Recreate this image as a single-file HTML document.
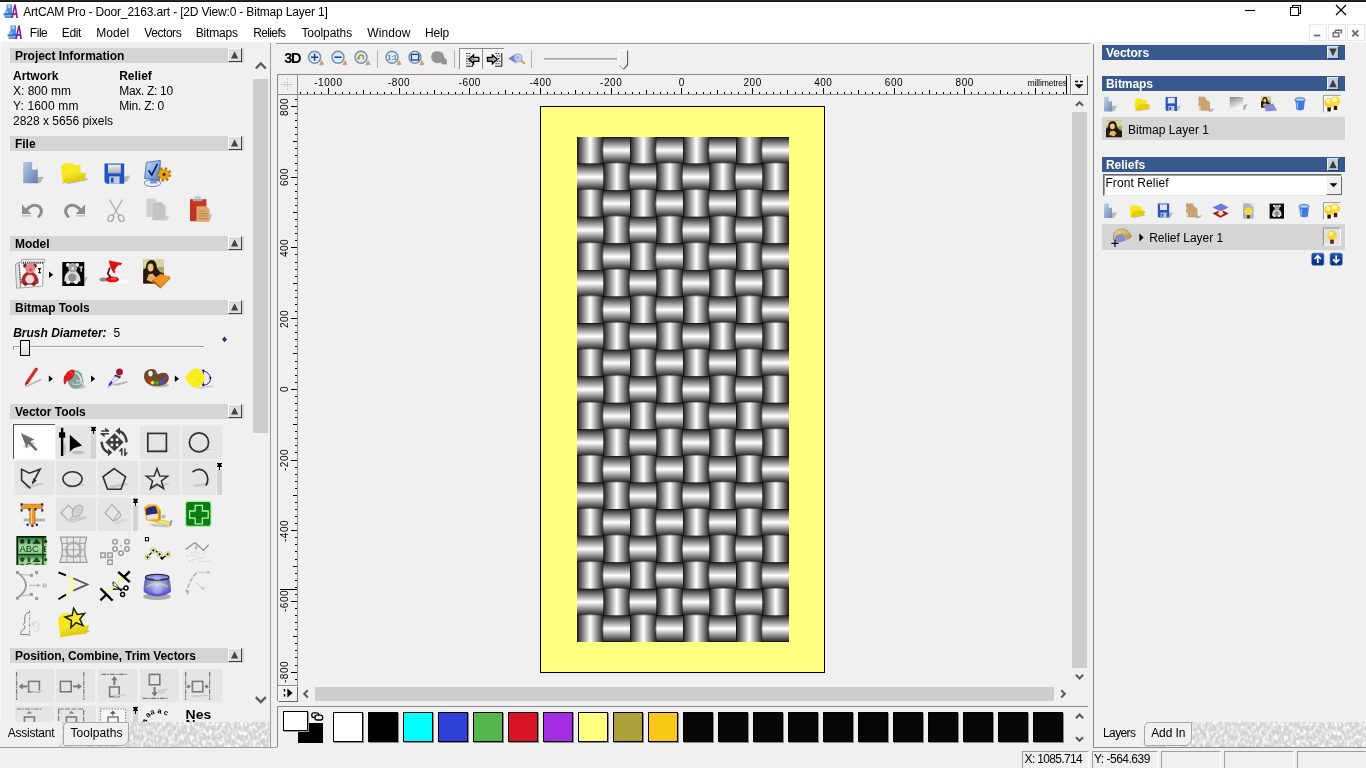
<!DOCTYPE html>
<html><head><meta charset="utf-8"><title>ArtCAM Pro - Door_2163.art</title>
<style>
*{box-sizing:border-box;margin:0;padding:0}
html,body{width:1366px;height:768px;overflow:hidden;background:#f0f0f0;font-family:"Liberation Sans",sans-serif;font-size:12px;color:#000}
.a{position:absolute}
.t{white-space:nowrap;line-height:normal}
svg{overflow:visible}
.sh{background:#d5d5d5}
.cb{background:#dedede;border-top:1px solid #fff;border-left:1px solid #fff;border-right:1px solid #404040;border-bottom:1px solid #404040}
.rh{background:#38598e}
.rcb{background:#c3cde0;border-top:1px solid #e8eef8;border-left:1px solid #e8eef8;border-right:1px solid #2a3a5a;border-bottom:1px solid #2a3a5a}
.cell{background:#e6e6e6}
.sunk{border-top:1px solid #a0a0a0;border-left:1px solid #a0a0a0;border-right:1px solid #fff;border-bottom:1px solid #fff}
.raised{background:#f0f0f0;border-top:1px solid #fff;border-left:1px solid #fff;border-right:1px solid #696969;border-bottom:1px solid #696969}
.sw{border:1px solid #000;box-shadow:1px 1px 0 #8a8a8a}
</style></head><body><div id="app" class="a" style="left:0;top:0;width:1366px;height:768px;overflow:hidden;will-change:transform">
<div class="a" style="left:0px;top:0px;width:1366px;height:42px;background:#fff"></div>
<div class="a" style="left:0px;top:0px;width:1366px;height:1px;background:#262626"></div>
<div class="a" style="left:0px;top:1px;width:1366px;height:1px;background:#171717"></div>
<svg class="a" style="left:2.5px;top:4px;" width="15" height="15" viewBox="0 0 15 15">
<rect x="3.5" y="0.5" width="5.5" height="9.5" fill="#4f8fd6"/>
<rect x="4.6" y="1.2" width="3" height="3" fill="#a8d4f4"/>
<rect x="0.6" y="9.2" width="9" height="2.2" fill="#2f6fc0"/>
<rect x="1.6" y="11.4" width="7.4" height="2.6" fill="#5b9be0"/>
<rect x="2" y="6.5" width="3" height="2.8" fill="#7fb4ea"/>
<path d="M8.2 14 L11.2 0.6 L12.8 0.6 L15 14 L13.2 14 L12.8 10.8 L10.6 10.8 L10 14 Z M10.9 9 L12.6 9 L11.9 4.4 Z" fill="#7a1f96" fill-rule="evenodd"/>
</svg>
<div class="a t" style="left:23.2px;top:4.94px;font-size:12px;letter-spacing:-0.176px;">ArtCAM Pro - Door_2163.art - [2D View:0 - Bitmap Layer 1]</div>
<svg class="a" style="left:1240px;top:0px;" width="120" height="22" viewBox="0 0 120 22"><path d="M5 10.5H15" stroke="#000" stroke-width="1.1" fill="none"/><path d="M50.5 7.5H58.5V15.5H50.5Z M52.5 7.5V5.5H60.5V13.5H58.5" stroke="#000" stroke-width="1.1" fill="none"/><path d="M96 5L106 15M106 5L96 15" stroke="#000" stroke-width="1.2" fill="none"/></svg>
<svg class="a" style="left:7.3px;top:24.5px;" width="15" height="15" viewBox="0 0 15 15">
<rect x="3.5" y="0.5" width="5.5" height="9.5" fill="#4f8fd6"/>
<rect x="4.6" y="1.2" width="3" height="3" fill="#a8d4f4"/>
<rect x="0.6" y="9.2" width="9" height="2.2" fill="#2f6fc0"/>
<rect x="1.6" y="11.4" width="7.4" height="2.6" fill="#5b9be0"/>
<rect x="2" y="6.5" width="3" height="2.8" fill="#7fb4ea"/>
<path d="M8.2 14 L11.2 0.6 L12.8 0.6 L15 14 L13.2 14 L12.8 10.8 L10.6 10.8 L10 14 Z M10.9 9 L12.6 9 L11.9 4.4 Z" fill="#7a1f96" fill-rule="evenodd"/>
</svg>
<div class="a t" style="left:29.8px;top:25.74px;font-size:12px;letter-spacing:-0.45px;">File</div>
<div class="a t" style="left:61.8px;top:25.74px;font-size:12px;letter-spacing:-0.35px;">Edit</div>
<div class="a t" style="left:96.2px;top:25.74px;font-size:12px;letter-spacing:0.08px;">Model</div>
<div class="a t" style="left:144.3px;top:25.74px;font-size:12px;letter-spacing:-0.44px;">Vectors</div>
<div class="a t" style="left:195.8px;top:25.74px;font-size:12px;letter-spacing:-0.19px;">Bitmaps</div>
<div class="a t" style="left:253.2px;top:25.74px;font-size:12px;letter-spacing:-0.63px;">Reliefs</div>
<div class="a t" style="left:301.4px;top:25.74px;font-size:12px;letter-spacing:-0.07px;">Toolpaths</div>
<div class="a t" style="left:367.2px;top:25.74px;font-size:12px;letter-spacing:0.12px;">Window</div>
<div class="a t" style="left:425.1px;top:25.74px;font-size:12px;letter-spacing:-0.2px;">Help</div>
<div class="a" style="left:1309px;top:24px;width:18px;height:17px;border:1px solid #e8e8e8;background:#fdfdfd"></div>
<div class="a" style="left:1328px;top:24px;width:18px;height:17px;border:1px solid #e8e8e8;background:#fdfdfd"></div>
<div class="a" style="left:1347px;top:24px;width:18px;height:17px;border:1px solid #e8e8e8;background:#fdfdfd"></div>
<svg class="a" style="left:1309px;top:24px;" width="56" height="17" viewBox="0 0 56 17"><rect x="5" y="10.6" width="6.2" height="1.8" fill="#6a6a6a"/><path d="M26.2 6.2H32.4V9.4 M26.2 6.2V8.2" stroke="#6a6a6a" stroke-width="1.5" fill="none"/><rect x="24.2" y="8.8" width="5.6" height="3.8" stroke="#6a6a6a" stroke-width="1.4" fill="none"/><path d="M43.3 6.3L49.3 12.3M49.3 6.3L43.3 12.3" stroke="#6a6a6a" stroke-width="1.9" fill="none"/></svg>
<div class="a" style="left:0px;top:42px;width:1px;height:706px;background:#fafafa"></div>
<div class="a" style="left:270px;top:43px;width:1px;height:705px;background:#9c9c9c"></div>
<div class="a" style="left:0px;top:746.5px;width:277px;height:1px;background:#9c9c9c"></div>
<div class="a" style="left:0;top:0;width:253px;height:721.5px;overflow:hidden"><div class="a sh" style="left:10px;top:48px;width:234px;height:15px;"></div><div class="a t" style="left:15px;top:48.94px;font-size:12px;letter-spacing:-0.04px;font-weight:bold;">Project Information</div><div class="a cb" style="left:228px;top:48px;width:14px;height:14px;"></div><div class="a sh" style="left:10px;top:136px;width:234px;height:15px;"></div><div class="a t" style="left:15px;top:136.94px;font-size:12px;letter-spacing:-0.04px;font-weight:bold;">File</div><div class="a cb" style="left:228px;top:136px;width:14px;height:14px;"></div><div class="a sh" style="left:10px;top:236px;width:234px;height:15px;"></div><div class="a t" style="left:15px;top:236.94px;font-size:12px;letter-spacing:-0.04px;font-weight:bold;">Model</div><div class="a cb" style="left:228px;top:236px;width:14px;height:14px;"></div><div class="a sh" style="left:10px;top:300px;width:234px;height:15px;"></div><div class="a t" style="left:15px;top:300.94px;font-size:12px;letter-spacing:-0.04px;font-weight:bold;">Bitmap Tools</div><div class="a cb" style="left:228px;top:300px;width:14px;height:14px;"></div><div class="a sh" style="left:10px;top:404px;width:234px;height:15px;"></div><div class="a t" style="left:15px;top:404.94px;font-size:12px;letter-spacing:-0.04px;font-weight:bold;">Vector Tools</div><div class="a cb" style="left:228px;top:404px;width:14px;height:14px;"></div><div class="a sh" style="left:10px;top:648px;width:234px;height:15px;"></div><div class="a t" style="left:15px;top:648.94px;font-size:12px;letter-spacing:-0.1px;font-weight:bold;">Position, Combine, Trim Vectors</div><div class="a cb" style="left:228px;top:648px;width:14px;height:14px;"></div><div class="a t" style="left:13px;top:68.84px;font-size:12px;font-weight:bold;">Artwork</div><div class="a t" style="left:119.2px;top:68.84px;font-size:12px;font-weight:bold;">Relief</div><div class="a t" style="left:13px;top:83.74px;font-size:12px;">X: 800 mm</div><div class="a t" style="left:119.2px;top:83.74px;font-size:12px;letter-spacing:-0.3px;">Max. Z: 10</div><div class="a t" style="left:13px;top:98.74px;font-size:12px;letter-spacing:0.15px;">Y: 1600 mm</div><div class="a t" style="left:119.2px;top:98.74px;font-size:12px;letter-spacing:-0.2px;">Min. Z: 0</div><div class="a t" style="left:13px;top:113.84px;font-size:12px;">2828 x 5656 pixels</div><div class="a t" style="left:13.2px;top:326.04px;font-size:12px;font-weight:bold;font-style:italic;">Brush Diameter:</div><div class="a t" style="left:113.6px;top:326.04px;font-size:12px;">5</div><div class="a" style="left:13px;top:346px;width:191px;height:1px;background:#a0a0a0"></div><div class="a" style="left:13px;top:347px;width:191px;height:1px;background:#fff"></div><div class="a" style="left:13px;top:346px;width:1px;height:4px;background:#a0a0a0"></div><div class="a" style="left:20px;top:340px;width:10px;height:16px;background:linear-gradient(#fdfdfd,#dcdcdc);border:1px solid #000"></div><div class="a" style="left:13px;top:424px;width:42px;height:35px;background:#fff;border-top:1px solid #555;border-left:1px solid #555"></div>
<div class="a" style="left:56px;top:426px;width:35px;height:33px;background:#e5e5e5"></div>
<div class="a" style="left:91px;top:426px;width:5px;height:33px;background:#d4d4d4"></div>
<div class="a" style="left:140px;top:426px;width:40px;height:33px;background:#e5e5e5"></div>
<div class="a" style="left:182px;top:426px;width:40px;height:33px;background:#e5e5e5"></div>
<div class="a" style="left:14px;top:461px;width:40px;height:34px;background:#e5e5e5"></div>
<div class="a" style="left:56px;top:461px;width:40px;height:34px;background:#e5e5e5"></div>
<div class="a" style="left:98px;top:461px;width:40px;height:34px;background:#e5e5e5"></div>
<div class="a" style="left:140px;top:461px;width:40px;height:34px;background:#e5e5e5"></div>
<div class="a" style="left:182px;top:461px;width:34px;height:34px;background:#e5e5e5"></div>
<div class="a" style="left:217px;top:469px;width:5px;height:26px;background:#d4d4d4"></div>
<div class="a" style="left:56px;top:498px;width:40px;height:32.5px;background:#e5e5e5"></div>
<div class="a" style="left:98px;top:498px;width:33px;height:32.5px;background:#e5e5e5"></div>
<div class="a" style="left:133px;top:505px;width:5px;height:25.5px;background:#d4d4d4"></div><div class="a" style="left:15px;top:669px;width:39px;height:33px;background:#e5e5e5"></div>
<div class="a" style="left:56px;top:669px;width:39px;height:33px;background:#e5e5e5"></div>
<div class="a" style="left:98px;top:669px;width:39px;height:33px;background:#e5e5e5"></div>
<div class="a" style="left:140px;top:669px;width:39px;height:33px;background:#e5e5e5"></div>
<div class="a" style="left:183px;top:669px;width:39px;height:33px;background:#e5e5e5"></div>
<div class="a" style="left:15px;top:706px;width:39px;height:20px;background:#e5e5e5"></div>
<div class="a" style="left:56px;top:706px;width:40px;height:20px;background:#e5e5e5"></div>
<div class="a" style="left:98px;top:706px;width:33px;height:20px;background:#e5e5e5"></div>
<div class="a" style="left:133px;top:710px;width:5px;height:16px;background:#d4d4d4"></div><svg class="a" style="left:0px;top:0px;" width="271" height="768" viewBox="0 0 271 768">
<defs>
<linearGradient id="gdoc" x1="0" y1="0" x2="1" y2="1"><stop offset="0" stop-color="#b9c9e2"/><stop offset="1" stop-color="#5f7fae"/></linearGradient>
<linearGradient id="gdocg" x1="0" y1="0" x2="1" y2="1"><stop offset="0" stop-color="#dcdcdc"/><stop offset="1" stop-color="#b4b4b4"/></linearGradient>
<linearGradient id="gfold" x1="0" y1="0" x2="0.6" y2="1"><stop offset="0" stop-color="#fbee3a"/><stop offset="1" stop-color="#d9bf00"/></linearGradient>
<linearGradient id="gmetal" x1="0" y1="0" x2="0" y2="1"><stop offset="0" stop-color="#f4f4f4"/><stop offset="1" stop-color="#a8a8b0"/></linearGradient>
<linearGradient id="gmon" x1="0" y1="0" x2="1" y2="1"><stop offset="0" stop-color="#bfe2ff"/><stop offset="1" stop-color="#4a7fd0"/></linearGradient>
<radialGradient id="gcyl" cx="0.5" cy="0.4" r="0.6"><stop offset="0" stop-color="#d8d8ff"/><stop offset="1" stop-color="#4a4ac8"/></radialGradient>
<linearGradient id="gabc" x1="0" y1="0" x2="0" y2="1"><stop offset="0" stop-color="#1e5a22"/><stop offset="0.5" stop-color="#9fd69a"/><stop offset="1" stop-color="#2a6a2c"/></linearGradient>
<linearGradient id="gabc2" x1="0" y1="0" x2="0" y2="1"><stop offset="0" stop-color="#2f7a36"/><stop offset="0.55" stop-color="#a6dca4"/><stop offset="1" stop-color="#8cc88c"/></linearGradient>
</defs>
<path d="M234.6 51.2L238.2 58.6H231Z" fill="#444"/>
<path d="M234.6 139.2L238.2 146.6H231Z" fill="#444"/>
<path d="M234.6 239.2L238.2 246.6H231Z" fill="#444"/>
<path d="M234.6 303.2L238.2 310.6H231Z" fill="#444"/>
<path d="M234.6 407.2L238.2 414.6H231Z" fill="#444"/>
<path d="M234.6 651.2L238.2 658.6H231Z" fill="#444"/><path d="M224.5 336.6L227 339.4L224.5 342.2L222 339.4Z" fill="#2a3a6a"/><path d="M37.8 177H43.8L40.5 182.8L37 183.4Z" fill="#b5b5b5"/>
<path d="M23.2 162H32.2L37.8 169.5V183.2H23.2Z" fill="url(#gdoc)"/>
<path d="M32.2 162L37.8 169.5H32.2Z" fill="#f4f8ff"/>
<path d="M66 184.5L87.5 180L88 178L70 181Z" fill="#b8b8b8"/>
<path d="M61 166.5L64.5 163H72L74 165H80.5V174L62.5 182.5Z" fill="#f6e822"/>
<path d="M62.5 183.6L65.5 174.5Q72 171.5 86.5 173.2L84.5 180.2Q72 181.5 62.5 183.6Z" fill="url(#gfold)"/>
<path d="M124 176.4L130.4 175.6L127 181.8L124 182.6Z" fill="#b9b9b9"/>
<path d="M104.5 163.6H124.2V183.8H106.6L104.5 181.8Z" fill="#1f55c2"/>
<rect x="108" y="164.6" width="12.8" height="8.8" fill="url(#gmetal)"/>
<rect x="109.2" y="176.4" width="10.4" height="7.4" fill="#c8ccd8"/>
<rect x="110.8" y="177.8" width="2.8" height="4.8" fill="#1f55c2"/>
<ellipse cx="152.5" cy="183.2" rx="8.2" ry="3.4" fill="#eef0fa" stroke="#5a78c8" stroke-width="0.9"/>
<path d="M150.6 178L156 178.6L157.4 183.6L150 183.6Z" fill="#8c8ed0"/>
<path d="M146.4 162.4L160.4 160.4L159.4 180.6L144.6 178.4Z" fill="url(#gmon)" stroke="#3b5fb0" stroke-width="0.8"/>
<path d="M148.6 170.4L151.8 175L157.4 164" stroke="#10104a" stroke-width="1.6" fill="none"/>
<circle cx="164" cy="174.4" r="5.4" fill="#e8a416"/><circle cx="164" cy="174.4" r="6" fill="none" stroke="#c07a0a" stroke-width="2.6" stroke-dasharray="2.5 2.2"/><circle cx="164" cy="174.4" r="1.7" fill="#5a3606"/>
<path d="M22 204.5V214H31.5L28 210.8Q33 204.5 38.5 208Q42 212 37 216.5L39 218.2Q46 212 40.8 206Q33.5 200.5 25.8 208.4Z" fill="#8c8c8c"/>
<rect x="22" y="215" width="9" height="1.6" fill="#c2c2c2"/>
<path d="M85 204.5V214H75.5L79 210.8Q74 204.5 68.5 208Q65 212 70 216.5L68 218.2Q61 212 66.2 206Q73.5 200.5 81.2 208.4Z" fill="#8c8c8c"/>
<rect x="76" y="215" width="9" height="1.6" fill="#c2c2c2"/>
<path d="M109.5 199.5L118.5 215M122.5 199.5L113.5 215" stroke="#aeaeae" stroke-width="1.3" fill="none"/>
<ellipse cx="110.8" cy="218.2" rx="2.6" ry="3.4" transform="rotate(28 110.8 218.2)" fill="none" stroke="#a6a6a6" stroke-width="1.3"/>
<ellipse cx="121.2" cy="218.2" rx="2.6" ry="3.4" transform="rotate(-28 121.2 218.2)" fill="none" stroke="#a6a6a6" stroke-width="1.3"/>
<path d="M165 216L169.6 215.4L167 220.5L165 221Z" fill="#cecece"/>
<path d="M146.5 198.5H154.6L157.6 201.6V217H146.5Z" fill="#d0d0d0"/>
<path d="M152 202H161.6L165.8 206.4V220.4H152Z" fill="#c4c4c4" stroke="#e2e2e2" stroke-width="0.8"/>
<path d="M208 214.6L212 214L210.4 220.6L208 221.6Z" fill="#c2c2c2"/>
<path d="M190 199.2H206.4V221.2H190Z" fill="#c2361e"/>
<path d="M194.5 196H201V200.5H194.5Z" fill="#c9c9d2"/><path d="M193 199H202.5V201.2H193Z" fill="#a9a9b2"/>
<path d="M196.5 206.2H206.4L209.6 209.6V221.8H196.5Z" fill="#dcaa70"/>
<path d="M198.5 211H206M198.5 213.5H208M198.5 216H208M198.5 218.5H208" stroke="#b98448" stroke-width="0.9"/><path d="M15.4 264.6L19 262.4L21 287.6L16.6 288.4Z" fill="#e4e4e4" stroke="#8e8e8e" stroke-width="0.8"/>
<path d="M19 262.4L43.6 259.8L42.6 286L21 288Z" fill="#fdfdfd" stroke="#9a9a9a" stroke-width="0.9"/>
<path d="M21.4 259.4L44.4 259.2L44 263L21.6 263.6Z" fill="#ececec" stroke="#8e8e8e" stroke-width="0.7"/>
<path d="M23 262.6H43" stroke="#333" stroke-width="1.6" stroke-dasharray="1 1.1"/><path d="M19.2 265L20.6 285" stroke="#555" stroke-width="1.4" stroke-dasharray="1 1.3"/>
<circle cx="25.2" cy="265.8" r="2.1" fill="#7c2020"/><circle cx="34.8" cy="265.8" r="2.1" fill="#7c2020"/><path d="M29.8 270.8Q20.8 273.2 21.2 283.2Q29.8 286.2 38.6 283.2Q38.8 273.2 29.8 270.8Z" fill="#a82c2c"/><circle cx="30.2" cy="268.6" r="4.9" fill="#e88484"/><ellipse cx="29.8" cy="279.2" rx="4.5" ry="4.4" fill="#f8d4d4"/><ellipse cx="25.4" cy="284.1" rx="2.3" ry="1.8" fill="#8c2424"/><ellipse cx="33.8" cy="284.1" rx="2.3" ry="1.8" fill="#8c2424"/>
<circle cx="30.6" cy="269.6" r="1.6" fill="#c85050"/>
<path d="M38 268.6H41M39.6 268.6V272.6M38.4 272.6H40.8" stroke="#000" stroke-width="1.1"/>
<path d="M49 271.5L53.2 274.7L49 277.9Z" fill="#000"/>
<path d="M84.4 277.6L87.6 276.8L85 283.6L84.4 284Z" fill="#b5b5b5"/>
<rect x="62.3" y="262" width="22" height="24" fill="#020202"/>
<circle cx="68.0" cy="265.1" r="2.0" fill="#f4f4f4"/><circle cx="77.0" cy="265.1" r="2.0" fill="#f4f4f4"/><path d="M72.3 269.8Q63.9 272.0 64.3 281.3Q72.3 284.1 80.5 281.3Q80.7 272.0 72.3 269.8Z" fill="#dadada"/><circle cx="72.7" cy="267.7" r="4.6" fill="#a4a4a4"/><ellipse cx="72.3" cy="277.6" rx="4.2" ry="4.1" fill="#8e8e8e"/><ellipse cx="68.2" cy="282.2" rx="2.1" ry="1.7" fill="#f4f4f4"/><ellipse cx="76.0" cy="282.2" rx="2.1" ry="1.7" fill="#f4f4f4"/>
<circle cx="72.8" cy="268.6" r="1.3" fill="#e8e8e8"/>
<path d="M79.2 267H83M81.1 267V271.8" stroke="#fff" stroke-width="1.2"/>
<ellipse cx="120" cy="281.4" rx="9" ry="2.4" fill="#fbfbfb"/>
<ellipse cx="103.4" cy="279.4" rx="3.8" ry="2" fill="#6a6a6a" opacity="0.75"/>
<ellipse cx="112.4" cy="279.4" rx="6.6" ry="2.9" fill="#e01414"/><ellipse cx="113.4" cy="278.6" rx="3.4" ry="1.3" fill="#f84a3a"/>
<path d="M111 278L107.8 273.6L109.8 267.6" stroke="#4a1010" stroke-width="1.7" fill="none"/>
<path d="M108.6 260.4L122.2 263L114.2 273.6Q110.4 269 108.6 260.4Z" fill="#d81414"/>
<ellipse cx="117.6" cy="268.4" rx="1.6" ry="4" transform="rotate(38 117.6 268.4)" fill="#fff4f0"/>
<rect x="143.2" y="259" width="20.8" height="24.6" fill="#8c8c50"/>
<rect x="143.2" y="259" width="20.8" height="8" fill="#d6d6a0"/><rect x="143.2" y="267" width="20.8" height="5" fill="#a8a870"/>
<path d="M143.2 283.6V270L146 268Q146 260.4 151.4 260Q156.6 260.2 156.8 268L160 272L164 274V283.6Z" fill="#2a1808"/>
<ellipse cx="150.6" cy="267.6" rx="2.9" ry="4" fill="#ecc890"/><path d="M146.6 280L148.6 274.6L152.6 273.6L156 277.6L153 282.6Z" fill="#dcb468"/>
<path d="M152.2 279.8L160.4 274L170.2 276.6L161 286.4Z" fill="#f29422"/><path d="M152.2 279.8L161 286.4L160.6 288.6L152.2 282Z" fill="#b86010"/><path d="M161 286.4L170.2 276.6L170.2 278.8L160.6 288.6Z" fill="#d07814"/><path d="M24.5 386.5L41 378.5L42 380L27 387Z" fill="#b8b8b8"/>
<path d="M24.8 385.5L26 381.5L34.8 368.6L37.4 370.2L28.4 383.4Z" fill="#d82828"/><path d="M24.8 385.5L26 381.5L28.4 383.4Z" fill="#6a3a30"/><path d="M34.8 368.6L35.8 367.4L38.2 369L37.4 370.2Z" fill="#a01818"/>
<path d="M48.8 375.6L53.0 378.8L48.8 382.0Z" fill="#000"/>
<ellipse cx="77.6" cy="386.6" rx="8" ry="2.3" fill="#c2c2c2"/>
<path d="M69 372.2Q76 367.4 81.6 373.6L83.6 382.6Q80.6 389.4 73.4 388.2Q67.8 386 67.4 379Z" fill="#85a39b"/>
<path d="M74.6 372.6Q80 373.4 81.4 381.4" stroke="#f0f4f2" stroke-width="1.3" fill="none"/>
<path d="M72 383.4Q77 386.4 82.4 382.6" stroke="#b9d0c9" stroke-width="1.2" fill="none"/>
<path d="M76.4 380.6Q82.6 380.6 84.2 386.2" stroke="#d6d6d6" stroke-width="1.1" fill="none"/>
<ellipse cx="69.8" cy="375.2" rx="3.9" ry="6.4" transform="rotate(38 69.8 375.2)" fill="#d61e1e"/>
<path d="M64.2 375.4Q63 380 64 384.2Q66.4 384.4 66.8 380.6L68 376.6Z" fill="#d61e1e"/>
<path d="M69 371.8Q72.4 372.2 72.8 374.4" stroke="#f26a5a" stroke-width="1" fill="none"/>
<path d="M91 375.6L95.2 378.8L91 382.0Z" fill="#000"/>
<path d="M112 384.5L127 381L128 382.5L117 386Z" fill="#b6b6b6"/>
<circle cx="119.5" cy="372" r="3.4" fill="#a01838"/><path d="M115 374.5L121 376.5L120 378.5L114 376.5Z" fill="#38383e"/>
<path d="M115.2 376.6L118.8 378L111.5 385L109.5 385.8L108.4 387.4L107.8 386.8L109 384.8L109.4 383.2Z" fill="#eaeafc" stroke="#8c8cc0" stroke-width="0.7"/>
<path d="M112 381.6L109.4 385.2" stroke="#2424a8" stroke-width="1.9"/>
<ellipse cx="159" cy="385" rx="10" ry="2.4" fill="#bdbdbd"/>
<path d="M144 378Q143 370 151 369Q156 368.6 156.5 372.5Q157 375 161 373Q167.5 371.5 168.8 377Q169 385.5 157 386Q146 386 144 378Z" fill="#6e4a2c"/>
<ellipse cx="150.5" cy="373.6" rx="2.2" ry="2.8" fill="#f2f2f2"/>
<circle cx="148.6" cy="381" r="1.9" fill="#e02020"/>
<circle cx="152.6" cy="382.6" r="1.9" fill="#f0e020"/>
<circle cx="157" cy="382.8" r="1.9" fill="#28b828"/>
<circle cx="161.6" cy="381.6" r="1.9" fill="#2060e0"/>
<circle cx="165" cy="378.4" r="1.9" fill="#8030c0"/>
<path d="M174.8 375.6L179.0 378.8L174.8 382.0Z" fill="#000"/>
<path d="M196 387.6L212 385.4L213.6 386.8L200 388.8Z" fill="#c9c9d6"/>
<path d="M203.2 370.6Q209.6 372.6 210.4 377.8Q211 384.6 203.2 385.2Z" fill="#e9e9f8" stroke="#23235e" stroke-width="1"/>
<path d="M185 377.6L190 371.6L193.6 368.4H198L204.4 375V381L199 387.4H193L188 383Z" fill="#f7ee20"/>
<path d="M195.6 377.2L201.6 383" stroke="#e2d60c" stroke-width="0.9"/>
<circle cx="203.2" cy="370.6" r="1.1" fill="#10103a"/><circle cx="210.4" cy="377.8" r="1.1" fill="#10103a"/><circle cx="203.2" cy="385.2" r="1.1" fill="#10103a"/><path d="M23 446.5L33 441.5L35 443.5L27 448.5Z" fill="#c9c9c9"/>
<path d="M20.8 433L34.4 439.4L30.2 441.6L37.6 449.4L35.6 451L28.4 443.6L26.6 448Z" fill="#6c6c6c"/>
<ellipse cx="64.5" cy="449" rx="1.6" ry="6" fill="#c6c6c6"/><ellipse cx="78" cy="452.6" rx="6.5" ry="1.8" fill="#bdbdbd"/>
<rect x="60.9" y="427.8" width="2.4" height="28.2" fill="#000"/><rect x="59" y="432.3" width="6.2" height="5.4" fill="#000"/>
<path d="M69.8 434.8V452L73.6 448.2L82 445.6Z" fill="#000"/>
<path d="M91 427.5H96M92.2 427V430H94.8V427M91 430.5H96M93.5 430.5V434" stroke="#000" stroke-width="1" fill="none"/><rect x="92" y="427" width="3" height="3.5" fill="#000"/>
<path d="M114.5 433.2L123.6 442.3L114.5 451.3L105.4 442.3Z" fill="#3c3c3c"/>
<rect x="110.6" y="438.4" width="2.6" height="2.6" fill="#f4f4f4"/>
<rect x="115.8" y="438.4" width="2.6" height="2.6" fill="#f4f4f4"/>
<rect x="110.6" y="443.6" width="2.6" height="2.6" fill="#f4f4f4"/>
<rect x="115.8" y="443.6" width="2.6" height="2.6" fill="#f4f4f4"/>
<path d="M119.6 431.2Q126 433.6 126.6 442.4" stroke="#3c3c3c" stroke-width="2.5" fill="none"/><path d="M115.4 431L120 427.2V435Z" fill="#3c3c3c"/>
<path d="M101.6 441.8Q102 450 108.4 452.6" stroke="#3c3c3c" stroke-width="2.5" fill="none"/><path d="M112.4 452.6L108 448.6V456.2Z" fill="#3c3c3c"/>
<path d="M101.2 431H109M100.6 433.8H109" stroke="#3c3c3c" stroke-width="1.5"/><path d="M105.2 427.6L109.4 431H105.2Z M100.2 433.8H104.6V437.2Z" fill="#3c3c3c"/>
<path d="M121.8 448V455.6M124.9 448.4V456" stroke="#3c3c3c" stroke-width="1.5"/><path d="M121.8 447.4V451.6H118.6Z M124.9 456.6V452.4H128.1Z" fill="#3c3c3c"/>
<path d="M148.5 450L166.5 449L170.5 450.6L150 451.8Z" fill="#c6c6c6"/>
<rect x="147.8" y="433.4" width="18.6" height="18" fill="none" stroke="#2e2e2e" stroke-width="1.7"/>
<path d="M192 450.5L208 448.5L212.5 449.6L196 452.6Z" fill="#c6c6c6"/>
<circle cx="199" cy="442.4" r="9.6" fill="none" stroke="#2e2e2e" stroke-width="1.7"/>
<path d="M23 486.5L41 483L45 484L27 488.6Z" fill="#c8c8c8"/>
<path d="M30.4 488.4L21.6 480.4V469.2L29.4 473.2L40 469.2L32.6 483.2" fill="none" stroke="#2e2e2e" stroke-width="1.6"/><path d="M32 484.6L33.2 478.6L36.8 480.6Z" fill="#2e2e2e"/>
<path d="M66 486.5L82 483.6L85 485L70 488.4Z" fill="#c8c8c8"/>
<ellipse cx="72.5" cy="479" rx="9.6" ry="7.3" fill="none" stroke="#2e2e2e" stroke-width="1.6"/>
<path d="M108 486L126 483L129 484.6L112 488.4Z" fill="#c8c8c8"/>
<path d="M114.2 468.6L125.6 476.8L121 489.2H107.6L103 476.8Z" fill="none" stroke="#2e2e2e" stroke-width="1.6"/>
<path d="M150 486L167 483L170 484.6L153 488.4Z" fill="#c8c8c8"/>
<polygon points="157.0,468.4 159.7,475.9 167.7,476.1 161.4,481.0 163.6,488.7 157.0,484.2 150.4,488.7 152.6,481.0 146.3,476.1 154.3,475.9" fill="none" stroke="#2e2e2e" stroke-width="1.5"/>
<path d="M193 485L206 483L209 484.4L196 486.8Z" fill="#c8c8c8"/>
<path d="M192.5 472Q200 466.5 205.5 472.5Q210 479 205.8 485.6" fill="none" stroke="#2e2e2e" stroke-width="1.7"/>
<path d="M217 463.5H222M218.2 463V466H220.8V463M217 466.5H222M219.5 466.5V470" stroke="#000" stroke-width="1" fill="none"/><rect x="218" y="463" width="3" height="3.5" fill="#000"/>
<rect x="23.6" y="518.6" width="21.4" height="2.8" fill="#b2b2b2"/>
<path d="M21.4 504.2H42.4V508.6H35V524H29.8V508.6H21.4Z" fill="#ee9a22" stroke="#b46a0a" stroke-width="0.7"/>
<path d="M31.4 508.8V523.6" stroke="#fbd08a" stroke-width="1.3"/>
<rect x="20.5" y="503.29999999999995" width="2.2" height="2.2" fill="#1c1c64"/>
<rect x="41.1" y="503.29999999999995" width="2.2" height="2.2" fill="#1c1c64"/>
<rect x="20.5" y="509.29999999999995" width="2.2" height="2.2" fill="#1c1c64"/>
<rect x="41.1" y="509.29999999999995" width="2.2" height="2.2" fill="#1c1c64"/>
<rect x="28.299999999999997" y="508.29999999999995" width="2.2" height="2.2" fill="#1c1c64"/>
<rect x="34.3" y="508.29999999999995" width="2.2" height="2.2" fill="#1c1c64"/>
<rect x="26.5" y="523.6999999999999" width="2.2" height="2.2" fill="#1c1c64"/>
<rect x="31.299999999999997" y="524.6999999999999" width="2.2" height="2.2" fill="#1c1c64"/>
<rect x="35.699999999999996" y="523.6999999999999" width="2.2" height="2.2" fill="#1c1c64"/>
<path d="M61 513L68.5 505L76 513L68.5 521Z" fill="none" stroke="#ababab" stroke-width="1.1"/>
<ellipse cx="77.5" cy="511" rx="4.5" ry="6.5" transform="rotate(35 77.5 511)" fill="#d2d2d2" stroke="#ababab" stroke-width="1"/>
<path d="M66 520L84 516L88 518L72 523Z" fill="#cdcdcd"/>
<path d="M105 513L112 504.5L119 512L113 521Z" fill="none" stroke="#ababab" stroke-width="1.1"/>
<path d="M119 512Q124 517 113 521" fill="none" stroke="#ababab" stroke-width="1.1"/><path d="M112 522L125 518.5L128 520L116 524.4Z" fill="#d6d6d6"/>
<path d="M133 499.3H138M134.2 498.8V501.8H136.8V498.8M133 502.3H138M135.5 502.3V505.8" stroke="#000" stroke-width="1" fill="none"/><rect x="134" y="498.8" width="3" height="3.5" fill="#000"/>
<path d="M149 523.6L166 525L170 527.4L153 526.6Z" fill="#c6c6c6"/>
<path d="M157 518.8L171.4 522.6L170.4 526L155.4 522.6Z" fill="#f6e468" stroke="#c0aa48" stroke-width="0.5"/>
<rect x="169.8" y="520.2" width="2" height="5.4" fill="#9c9c9c" transform="rotate(14 170.8 523)"/>
<path d="M143.8 507.4L148 504.4H156.8L161 510.6V519.2L157.4 522.6L146 520.2Z" fill="#f2b41c"/>
<path d="M145.6 509Q150 505.6 155.8 506.6L158 513.6L146.2 515.2Z" fill="#2b2b74"/>
<path d="M146.2 515.2L158 513.6L157.4 519L147 519.4Z" fill="#e6dfe8"/>
<path d="M158.6 508L160.4 511V519L158.8 520.8Z" fill="#c88c0c"/>
<circle cx="163.4" cy="516.8" r="2" fill="#b4b4c0"/>
<rect x="185.6" y="501.4" width="25.4" height="25" rx="2.6" fill="#0a7d12" stroke="#a6f0a0" stroke-width="1.2"/>
<path d="M195.2 505.4H202.4V511H208.2V518.2H202.4V523.8H195.2V518.2H189.6V511H195.2Z" fill="none" stroke="#b6f4b0" stroke-width="1.3"/><rect x="17.2" y="536" width="29" height="29" fill="#4c9a50"/>
<rect x="18.8" y="537.6" width="23.4" height="16" fill="url(#gabc2)"/><rect x="18.8" y="555.2" width="23.4" height="9.8" fill="url(#gabc2)"/>
<rect x="43.6" y="537.6" width="2.6" height="16" fill="url(#gabc2)"/><rect x="43.6" y="555.2" width="2.6" height="9.8" fill="url(#gabc2)"/>
<path d="M17.2 565V536.8H46.2" fill="none" stroke="#081c0a" stroke-width="1.7"/>
<path d="M18 554.5H46.2M42.9 537V565" stroke="#0c2c10" stroke-width="1.2"/>
<circle cx="22.2" cy="541.4" r="2.3" fill="#0e3614"/><rect x="27.6" y="539.2" width="2.6" height="4.6" fill="#0e3614"/><path d="M32.4 543.8L36.6 538.8L40.8 543.8Z" fill="#0e3614"/>
<text x="19.4" y="551.6" font-size="9.4" font-family="Liberation Sans" fill="#0e3614" textLength="19.6" lengthAdjust="spacingAndGlyphs">ABC</text>
<circle cx="22.2" cy="559.6" r="2.3" fill="#1c5224"/><rect x="27.6" y="557.4" width="2.6" height="4.6" fill="#1c5224"/><path d="M32.4 562L36.6 557L40.8 562Z" fill="#1c5224"/>
<path d="M20 565Q22 563.4 24 565M27 565V563.6H31M34.6 565Q36.6 563.2 39.6 564.6" stroke="#1c5224" stroke-width="1" fill="none"/>
<circle cx="45.6" cy="541.4" r="1.6" fill="#0e3614"/><path d="M44.4 546.4V551.6M44.4 546.6H46.2M44.4 549H46.2M44.4 551.4H46.2" stroke="#0e3614" stroke-width="0.9" fill="none"/><circle cx="45.6" cy="559.6" r="1.6" fill="#1c5224"/>
<path d="M60.4 537.2H86.6Q82.6 550 87 562.4H60Q64.6 550 60.4 537.2Z" fill="#e8e8e8" stroke="#9a9a9a" stroke-width="1.2"/>
<path d="M66.8 537.2Q68.6 550 66.6 562.4M73.5 537.2V562.4M80.2 537.2Q78.4 550 80.4 562.4M61.8 543.4H85.2M63 549.8H84M61.8 556.2H85.2" fill="none" stroke="#9a9a9a" stroke-width="0.9"/>
<circle cx="73.5" cy="549.8" r="7.2" fill="none" stroke="#b0b0b0" stroke-width="2.4"/>
<rect x="100.8" y="553.0" width="4.4" height="4.4" fill="#f4f4f4" stroke="#9a9a9a" stroke-width="1.5"/>
<rect x="107.8" y="553.0" width="4.4" height="4.4" fill="#f4f4f4" stroke="#9a9a9a" stroke-width="1.5"/>
<rect x="107.8" y="560.0" width="4.4" height="4.4" fill="#f4f4f4" stroke="#9a9a9a" stroke-width="1.5"/>
<circle cx="115" cy="541.8" r="2.2" fill="#f4f4f4" stroke="#9a9a9a" stroke-width="1.5"/>
<circle cx="127" cy="541.8" r="2.2" fill="#f4f4f4" stroke="#9a9a9a" stroke-width="1.5"/>
<circle cx="115" cy="549" r="2.2" fill="#f4f4f4" stroke="#9a9a9a" stroke-width="1.5"/>
<circle cx="127" cy="549" r="2.2" fill="#f4f4f4" stroke="#9a9a9a" stroke-width="1.5"/>
<circle cx="121" cy="553.2" r="2.2" fill="#f4f4f4" stroke="#9a9a9a" stroke-width="1.5"/>
<rect x="120.3" y="545" width="1.4" height="1.4" fill="#9a9a9a"/>
<rect x="145.4" y="537.6" width="3.2" height="3.2" fill="#fff" stroke="#000" stroke-width="1"/>
<path d="M147.6 557.2L153.3 550.4L156.4 551.4L159.6 554.3L162 558.6L167.8 554.3" fill="none" stroke="#000" stroke-width="1.3"/>
<path d="M159.8 557.4L162 560.2L164.4 557.4Z" fill="#000"/>
<circle cx="147.6" cy="557.2" r="2.7" fill="#f7f7b8" stroke="#a4a458" stroke-width="0.6"/><path d="M146.2 557.2H149.0M147.6 555.8000000000001V558.6" stroke="#000" stroke-width="0.8"/>
<circle cx="153.3" cy="550.4" r="2.7" fill="#f7f7b8" stroke="#a4a458" stroke-width="0.6"/><path d="M151.9 550.4H154.70000000000002M153.3 549.0V551.8" stroke="#000" stroke-width="0.8"/>
<circle cx="159.6" cy="554.3" r="2.7" fill="#f7f7b8" stroke="#a4a458" stroke-width="0.6"/><path d="M158.2 554.3H161.0M159.6 552.9V555.6999999999999" stroke="#000" stroke-width="0.8"/>
<circle cx="167.8" cy="554.3" r="2.7" fill="#f7f7b8" stroke="#a4a458" stroke-width="0.6"/><path d="M166.4 554.3H169.20000000000002M167.8 552.9V555.6999999999999" stroke="#000" stroke-width="0.8"/>
<path d="M185.6 549.6L193.6 543.4Q195 542.2 196.2 543.6L203.4 550.4L208.8 544.6" fill="none" stroke="#8e8e8e" stroke-width="1.3"/>
<path d="M196.2 544.6V548.6M195 547.2L196.2 549.2L197.4 547.2" fill="none" stroke="#9a9a9a" stroke-width="0.8"/>
<path d="M187 557Q192 553 197 556.4T207 555.4M189 561.4Q195 557.6 200 560.6T210 559.6M191 553Q195 551 199 553.2T205.6 552.6" fill="none" stroke="#d4d4d4" stroke-width="1.2" stroke-dasharray="2 1.4"/>
<path d="M17.4 572.4Q34.6 585.4 17.4 598.2" fill="none" stroke="#9a9a9a" stroke-width="1.8"/>
<path d="M20.6 574.4L31.4 575.4M20.6 596.2L31.4 594.4M29 585.4H39.6" fill="none" stroke="#b4b4b4" stroke-width="1"/><path d="M37.4 583.6L40.6 585.4L37.4 587.2Z" fill="#b4b4b4"/>
<rect x="15.899999999999999" y="570.9" width="3" height="3" fill="#9a9a9a"/>
<rect x="15.899999999999999" y="596.7" width="3" height="3" fill="#9a9a9a"/>
<rect x="29.9" y="573.9" width="3" height="3" fill="#9a9a9a"/>
<rect x="35.1" y="571.1" width="3" height="3" fill="#9a9a9a"/>
<rect x="29.9" y="592.9" width="3" height="3" fill="#9a9a9a"/>
<rect x="35.1" y="596.9" width="3" height="3" fill="#9a9a9a"/>
<rect x="43.2" y="584" width="2.8" height="2.8" fill="#f4f4f4" stroke="#9a9a9a" stroke-width="0.8"/>
<path d="M65.4 574.8L74.6 579L74.6 590L65.4 594.8L71 584.8Z" fill="#f6f9b4"/>
<path d="M58.4 572.4L66 575.4M58.4 599.2L66 594.6" stroke="#000" stroke-width="1.9" fill="none"/>
<path d="M66 575.4L73.4 578.4M66 594.6L73.4 590.6" stroke="#e4ea7a" stroke-width="1.2" stroke-dasharray="1.2 1" fill="none"/>
<path d="M73.4 578.4L87.4 584.4L73.4 590.6" stroke="#5a5a5a" stroke-width="1.7" fill="none"/>
<path d="M107.5 593L123 577" stroke="#f2f6a8" stroke-width="3.4"/>
<path d="M118.2 571.8L129.8 582.2M129.8 571.4L123.6 577.4" stroke="#000" stroke-width="2.4" fill="none"/>
<path d="M100.4 588.4L112.6 600.6M100.4 600.4L106.6 594.2" stroke="#000" stroke-width="2.2" fill="none"/>
<path d="M112.6 582.6L121.6 591.2M112.8 589.2H124" stroke="#000" stroke-width="1.2" fill="none"/><path d="M113.4 581.8L115.6 583.6L119.6 588.4L113 585.4Z" fill="#fff" stroke="#000" stroke-width="0.7"/>
<circle cx="126" cy="588" r="2" fill="#fff" stroke="#000" stroke-width="1.5"/><circle cx="122.6" cy="594.4" r="2" fill="#fff" stroke="#000" stroke-width="1.5"/>
<ellipse cx="157" cy="596.6" rx="14" ry="3.4" fill="#aaaaaa"/>
<path d="M145.4 577.4Q143 586 143.8 592Q157 600.4 170.8 592Q171.4 586 169 577.4Z" fill="url(#gcyl)"/>
<ellipse cx="157.2" cy="577.2" rx="11.8" ry="2.9" fill="#8c8ce4" stroke="#2c2c3c" stroke-width="1.3"/>
<ellipse cx="157.2" cy="578.2" rx="4" ry="1.6" fill="#a8a8f4"/>
<path d="M145.6 587.4Q157 579.6 169.2 587.4" fill="none" stroke="#dde25a" stroke-width="1.1"/>
<path d="M146.6 579.6L146 588M167.8 579.6L168.6 588" stroke="#6c7a4a" stroke-width="0.9"/>
<ellipse cx="157.2" cy="590" rx="5" ry="4" fill="#b4b4f8" opacity="0.55"/>
<path d="M196.6 572.4Q190 580 186.6 590.4" fill="none" stroke="#b4b4b4" stroke-width="1.5" stroke-dasharray="5 1.6"/>
<path d="M198 572.4H209M196 583L203 588.6" stroke="#c6c6c6" stroke-width="1" fill="none"/><path d="M207.4 570.8L210.4 572.4L207.4 574Z M185 590L187.6 595.6L189.6 590.6Z M201.4 589L204.4 589.8L203.4 586.8Z" fill="#b4b4b4"/>
<path d="M29.6 610V636" stroke="#8a8a8a" stroke-width="0.9" stroke-dasharray="3.4 1.2 1 1.2"/>
<path d="M29 612.4Q24.4 613.4 24.8 619Q25.4 622.4 23.4 624.6Q25.6 626 24.8 628.4Q20.6 630.4 20.6 634.6H29" fill="none" stroke="#7c7c7c" stroke-width="1"/>
<path d="M33 622Q38.6 621 39 627Q38.6 631.6 34 632" fill="none" stroke="#dadada" stroke-width="1.1"/><path d="M31 624L34 621.6L34 626Z" fill="#cfcfcf"/>
<path d="M62 637L88.6 632L89.6 630L66 634Z" fill="#b8b8b8"/>
<path d="M58 618.4L62 613.4H71L73.4 616H82V628L60 636Z" fill="#f6e81e"/>
<path d="M59.6 637.6L63 627.4Q71 623.4 89 625.6L86.6 633.4Q72 634.6 59.6 637.6Z" fill="url(#gfold)"/>
<polygon points="73.6,608.2 77.3,614.4 84.6,613.5 79.8,619.0 82.9,625.6 76.2,622.7 70.8,627.7 71.5,620.5 65.1,617.0 72.2,615.3" fill="#f6ea2a" stroke="#1c1c1c" stroke-width="1.5"/><path d="M16.6 672V700" stroke="#7a7a7a" stroke-width="1.2" stroke-dasharray="5 1 1.6 1"/>
<rect x="28.6" y="681.4" width="10.8" height="10.4" fill="none" stroke="#7a7a7a" stroke-width="1.6"/><path d="M21.4 686.4H27.4" stroke="#7a7a7a" stroke-width="2"/><path d="M18.6 686.4L22.8 683.2V689.6Z" fill="#7a7a7a"/>
<path d="M30 691.4L42 690.4L44 691.4L33 693Z" fill="#cfcfcf"/>
<path d="M83.8 672V700" stroke="#7a7a7a" stroke-width="1.2" stroke-dasharray="5 1 1.6 1"/>
<rect x="60.4" y="681.4" width="10.8" height="10.4" fill="none" stroke="#7a7a7a" stroke-width="1.6"/><path d="M73 686.4H79" stroke="#7a7a7a" stroke-width="2"/><path d="M82 686.4L77.8 683.2V689.6Z" fill="#7a7a7a"/>
<path d="M101.4 674.4H127.6" stroke="#7a7a7a" stroke-width="1.2" stroke-dasharray="5 1 1.6 1"/>
<rect x="109.6" y="687" width="9.6" height="9.6" fill="none" stroke="#7a7a7a" stroke-width="1.6"/><path d="M114.4 679V685" stroke="#7a7a7a" stroke-width="2"/><path d="M114.4 676L111.2 680.2H117.6Z" fill="#7a7a7a"/>
<path d="M112 695L124 694L126 695.4L115 697Z" fill="#cfcfcf"/>
<path d="M142.6 698.4H168" stroke="#7a7a7a" stroke-width="1.2" stroke-dasharray="5 1 1.6 1"/>
<rect x="149.4" y="674.4" width="10.4" height="10.4" fill="none" stroke="#7a7a7a" stroke-width="1.6"/><path d="M154.6 687V693" stroke="#7a7a7a" stroke-width="2"/><path d="M154.6 696.4L151.4 692.2H157.8Z" fill="#7a7a7a"/>
<path d="M158 690L168 688.4L164 693.6L158 694Z" fill="#cfcfcf"/>
<path d="M185.6 672V700M209.6 672V700" stroke="#7a7a7a" stroke-width="1.2" stroke-dasharray="5 1 1.6 1"/>
<rect x="192.4" y="681.4" width="10.4" height="10.4" fill="none" stroke="#7a7a7a" stroke-width="1.6"/><path d="M188.4 684.6L191 686.6L188.4 688.6L186.4 686.6Z M206.8 684.6L204.2 686.6L206.8 688.6L208.8 686.6Z" fill="#7a7a7a"/>
<path d="M190 695.4L206 694.4L208 696L193 697.4Z" fill="#cfcfcf"/>
<path d="M16.6 709H42" stroke="#7a7a7a" stroke-width="1.2" stroke-dasharray="5 1 1.6 1"/><path d="M29.4 711L26.6 713.4H32.2Z" fill="#7a7a7a"/><rect x="24.4" y="717" width="10" height="10" fill="none" stroke="#7a7a7a" stroke-width="1.6"/>
<rect x="58.6" y="709" width="25" height="20" fill="none" stroke="#7a7a7a" stroke-width="1.2" stroke-dasharray="5 1.5"/><path d="M71.4 711L68.6 713.4H74.2Z" fill="#7a7a7a"/><rect x="66.4" y="717" width="10" height="10" fill="none" stroke="#7a7a7a" stroke-width="1.6"/>
<rect x="100.6" y="709" width="25" height="20" fill="#f6f6f6" stroke="#7a7a7a" stroke-width="1.1" stroke-dasharray="1.2 1.6"/><path d="M112.8 711L110.6 713.4H115Z M112.8 713V716" fill="#555" stroke="#555" stroke-width="0.8"/><rect x="108" y="717" width="10" height="10" fill="none" stroke="#7a7a7a" stroke-width="1.5"/>
<path d="M133 707.5H138M134.2 707V710H136.8V707M133 710.5H138M135.5 710.5V714" stroke="#000" stroke-width="1" fill="none"/><rect x="134" y="707" width="3" height="3.5" fill="#000"/>
<path id="arcp" d="M146 724Q150 708 168 716" fill="none"/>
<text font-size="7.5" font-family="Liberation Sans" font-weight="bold" fill="#000"><textPath href="#arcp">a aa a c</textPath></text>
<text x="185.6" y="719.4" font-size="13.4" font-family="Liberation Sans" font-weight="bold" fill="#000" textLength="25.6" lengthAdjust="spacingAndGlyphs">Nes</text>
<text x="185.6" y="729.4" font-size="13.4" font-family="Liberation Sans" font-weight="bold" fill="#000" textLength="25.6" lengthAdjust="spacingAndGlyphs">Nes</text></svg></div>
<div class="a" style="left:253px;top:78.5px;width:15px;height:354px;background:#cdcdcd"></div>
<svg class="a" style="left:0px;top:0px;" width="271" height="768" viewBox="0 0 271 768"><path d="M255.8 68.5L260.8 63.5L265.8 68.5" fill="none" stroke="#5c5c5c" stroke-width="2.4"/><path d="M255.8 697.1L260.8 702.1L265.8 697.1" fill="none" stroke="#5c5c5c" stroke-width="2.4"/></svg>
<div class="a" style="left:0px;top:721.5px;width:270px;height:25px;background:#d2d2d2"></div>
<svg class="a" style="left:0px;top:721.5px;" width="270" height="25" viewBox="0 0 270 25"><defs><filter id="nz" x="0" y="0" width="100%" height="100%"><feTurbulence type="fractalNoise" baseFrequency="0.32 0.22" numOctaves="2" seed="7"/><feColorMatrix type="matrix" values="0 0 0 0 1  0 0 0 0 1  0 0 0 0 1  2.6 0 0 0 -1.02"/></filter></defs><rect width="270" height="25" filter="url(#nz)"/></svg>
<div class="a" style="left:0px;top:721.5px;width:62px;height:25px;background:#f0f0f0;border-bottom-right-radius:7px"></div>
<div class="a" style="left:62.5px;top:721.5px;width:66.5px;height:24px;background:#f0f0f0;border:1px solid #a8a8a8;border-top-left-radius:5px;border-bottom-right-radius:7px;border-bottom-left-radius:2px"></div>
<div class="a t" style="left:7.8px;top:725.54px;font-size:12px;letter-spacing:-0.24px;">Assistant</div>
<div class="a t" style="left:70.4px;top:725.74px;font-size:12px;letter-spacing:0.1px;">Toolpaths</div>
<div class="a" style="left:276px;top:43px;width:814px;height:1px;background:#a0a0a0"></div>
<div class="a t" style="left:284.2px;top:49.59px;font-size:14.6px;letter-spacing:-1.2px;font-weight:bold;">3D</div>
<div class="a" style="left:459px;top:48px;width:22.5px;height:21px;background:#f6f6f6;border-left:1px solid #8c8c8c;border-top:1px solid #8c8c8c"></div>
<div class="a" style="left:482px;top:48px;width:22px;height:21px;background:#f6f6f6;border-left:1px solid #8c8c8c;border-top:1px solid #8c8c8c"></div><svg class="a" style="left:0px;top:0px;" width="1366" height="100" viewBox="0 0 1366 100"><path d="M321.6 59.800000000000004L324.20000000000005 64.60000000000001Q321.6 66.0 319.0 64.8Z" fill="#c9a26c"/><circle cx="314.6" cy="57.2" r="6" fill="#d4ecfb" stroke="#7c8ca6" stroke-width="1.4"/><path d="M311 57.2H318.2M314.6 53.6V60.8" stroke="#23407a" stroke-width="1.5"/>
<path d="M345 59.800000000000004L347.6 64.60000000000001Q345 66.0 342.4 64.8Z" fill="#c9a26c"/><circle cx="338" cy="57.2" r="6" fill="#d4ecfb" stroke="#7c8ca6" stroke-width="1.4"/><path d="M334.4 57.2H341.6" stroke="#23407a" stroke-width="1.5"/>
<path d="M368 59.800000000000004L370.6 64.60000000000001Q368 66.0 365.4 64.8Z" fill="#c9a26c"/><circle cx="361" cy="57.2" r="6" fill="#d4ecfb" stroke="#7c8ca6" stroke-width="1.4"/><path d="M358.4 58.4Q358.6 54.6 362 55Q364.4 56 363 59.4" fill="none" stroke="#b09820" stroke-width="1.5"/><path d="M356.6 57.4L358.6 60.6L360.4 57.2Z" fill="#b09820"/>
<path d="M377.5 50V68" stroke="#b4b4b4" stroke-width="1"/>
<path d="M399 59.800000000000004L401.6 64.60000000000001Q399 66.0 396.4 64.8Z" fill="#c9a26c"/><circle cx="392" cy="57.2" r="6" fill="#d4ecfb" stroke="#7c8ca6" stroke-width="1.4"/><text x="387.6" y="59.6" font-size="6.4" font-family="Liberation Sans" font-weight="bold" fill="#5a78a8">1:1</text>
<path d="M422 59.800000000000004L424.6 64.60000000000001Q422 66.0 419.4 64.8Z" fill="#c9a26c"/><circle cx="415" cy="57.2" r="6" fill="#d4ecfb" stroke="#7c8ca6" stroke-width="1.4"/><rect x="411.4" y="54.4" width="7.2" height="5.6" fill="none" stroke="#23407a" stroke-width="1.3"/>
<path d="M431.2 57Q431 51.2 437.6 51.2Q444 51.4 444 57L446.8 60L447 64.6L441.6 64.2L441 62.6Q436 64.2 433 61.6Q431 59.6 431.2 57Z" fill="#949494"/>
<path d="M454.5 50V68" stroke="#b4b4b4" stroke-width="1"/>
<defs><linearGradient id="gar" x1="0" y1="0" x2="1" y2="0"><stop offset="0" stop-color="#6e6e6e"/><stop offset="1" stop-color="#d8d8d8"/></linearGradient></defs>
<path d="M466.2 53.5H471M466.2 56H470M466.2 58.6H468.6M466.2 61.2H470M466.2 63.8H471" stroke="#222" stroke-width="1.1" stroke-dasharray="1.5 1"/>
<path d="M466 66.2H472.6V64" stroke="#222" stroke-width="1.1" fill="none"/>
<path d="M468.8 59.3L473.6 55V57.3H478.8V61.4H473.6V63.7Z" fill="url(#gar)" stroke="#000" stroke-width="1.3" stroke-linejoin="miter"/>
<path d="M495.4 53.5H500.4M496.4 56H500.4M498 58.6H500.4M496.4 61.2H500.4M495.4 63.8H500.4" stroke="#222" stroke-width="1.1" stroke-dasharray="1.5 1"/>
<path d="M501.8 53V66.3H495" stroke="#222" stroke-width="1.1" fill="none"/>
<path d="M497.2 59.3L492.4 55V57.3H487.4V61.4H492.4V63.7Z" fill="url(#gar)" stroke="#000" stroke-width="1.3"/>
<path d="M520.6 60.2L524.2 63.2" stroke="#c8a47a" stroke-width="2.2" stroke-linecap="round"/>
<path d="M508.2 58.4L516.4 53.6V63.6Z" fill="#7c7ccc"/>
<circle cx="518.2" cy="57.8" r="4" fill="#c4d0f6" stroke="#98a4d4" stroke-width="0.9"/><circle cx="517.6" cy="57.6" r="1.8" fill="#a8b4ee"/>
<path d="M531.5 50V68" stroke="#b4b4b4" stroke-width="1"/>
<path d="M544 59H617" stroke="#8c8c8c" stroke-width="1.6"/><path d="M544 60.2H617" stroke="#fcfcfc" stroke-width="0.8"/>
<path d="M619 50.5H627.5V65L623.4 69.4L619 65Z" fill="#eeeeee"/><path d="M619 65V50.5H627" stroke="#fff" stroke-width="1" fill="none"/><path d="M627.6 50.4V65L623.4 69.4" stroke="#5a5a5a" stroke-width="1.1" fill="none"/><path d="M619.2 65.2L623.4 69.4" stroke="#a0a0a0" stroke-width="1" fill="none"/></svg>
<div class="a" style="left:540px;top:106px;width:285px;height:567px;background:#ffff80;border:1px solid #000"></div>
<svg class="a" style="left:0px;top:0px;" width="1366" height="768" viewBox="0 0 1366 768"><defs><linearGradient id="wv" x1="0" y1="0" x2="1" y2="0"><stop offset="0" stop-color="#000000"/><stop offset="0.035" stop-color="#2e2e2e"/><stop offset="0.47" stop-color="#f4f4f4"/><stop offset="0.5" stop-color="#ffffff"/><stop offset="0.53" stop-color="#f4f4f4"/><stop offset="0.965" stop-color="#2e2e2e"/><stop offset="1" stop-color="#000000"/></linearGradient><linearGradient id="wh" x1="0" y1="0" x2="0" y2="1"><stop offset="0" stop-color="#000000"/><stop offset="0.035" stop-color="#2e2e2e"/><stop offset="0.47" stop-color="#f4f4f4"/><stop offset="0.5" stop-color="#ffffff"/><stop offset="0.53" stop-color="#f4f4f4"/><stop offset="0.965" stop-color="#2e2e2e"/><stop offset="1" stop-color="#000000"/></linearGradient><linearGradient id="we" x1="0" y1="0" x2="0" y2="1"><stop offset="0" stop-color="#000" stop-opacity="0.5"/><stop offset="0.05" stop-color="#000" stop-opacity="0"/><stop offset="0.95" stop-color="#000" stop-opacity="0"/><stop offset="1" stop-color="#000" stop-opacity="0.5"/></linearGradient><linearGradient id="we2" x1="0" y1="0" x2="1" y2="0"><stop offset="0" stop-color="#000" stop-opacity="0.5"/><stop offset="0.05" stop-color="#000" stop-opacity="0"/><stop offset="0.95" stop-color="#000" stop-opacity="0"/><stop offset="1" stop-color="#000" stop-opacity="0.5"/></linearGradient><clipPath id="wclip"><rect x="577" y="137" width="212" height="505"/></clipPath><g id="cv"><path d="M0 0Q13.25 -1.80 26.50 0V26.58Q13.25 28.38 0 26.58Z" fill="url(#wv)"/><path d="M0 0Q13.25 -1.80 26.50 0V26.58Q13.25 28.38 0 26.58Z" fill="url(#we)"/></g><g id="chh"><path d="M0 0H26.50Q28.30 13.29 26.50 26.58H0Q-1.80 13.29 0 0Z" fill="url(#wh)"/><path d="M0 0H26.50Q28.30 13.29 26.50 26.58H0Q-1.80 13.29 0 0Z" fill="url(#we2)"/></g></defs><g clip-path="url(#wclip)"><rect x="577" y="137" width="212" height="505" fill="#1a1a1a"/><use href="#cv" x="577.00" y="137.00"/><use href="#chh" x="603.50" y="137.00"/><use href="#cv" x="630.00" y="137.00"/><use href="#chh" x="656.50" y="137.00"/><use href="#cv" x="683.00" y="137.00"/><use href="#chh" x="709.50" y="137.00"/><use href="#cv" x="736.00" y="137.00"/><use href="#chh" x="762.50" y="137.00"/><use href="#chh" x="577.00" y="163.58"/><use href="#cv" x="603.50" y="163.58"/><use href="#chh" x="630.00" y="163.58"/><use href="#cv" x="656.50" y="163.58"/><use href="#chh" x="683.00" y="163.58"/><use href="#cv" x="709.50" y="163.58"/><use href="#chh" x="736.00" y="163.58"/><use href="#cv" x="762.50" y="163.58"/><use href="#cv" x="577.00" y="190.16"/><use href="#chh" x="603.50" y="190.16"/><use href="#cv" x="630.00" y="190.16"/><use href="#chh" x="656.50" y="190.16"/><use href="#cv" x="683.00" y="190.16"/><use href="#chh" x="709.50" y="190.16"/><use href="#cv" x="736.00" y="190.16"/><use href="#chh" x="762.50" y="190.16"/><use href="#chh" x="577.00" y="216.74"/><use href="#cv" x="603.50" y="216.74"/><use href="#chh" x="630.00" y="216.74"/><use href="#cv" x="656.50" y="216.74"/><use href="#chh" x="683.00" y="216.74"/><use href="#cv" x="709.50" y="216.74"/><use href="#chh" x="736.00" y="216.74"/><use href="#cv" x="762.50" y="216.74"/><use href="#cv" x="577.00" y="243.32"/><use href="#chh" x="603.50" y="243.32"/><use href="#cv" x="630.00" y="243.32"/><use href="#chh" x="656.50" y="243.32"/><use href="#cv" x="683.00" y="243.32"/><use href="#chh" x="709.50" y="243.32"/><use href="#cv" x="736.00" y="243.32"/><use href="#chh" x="762.50" y="243.32"/><use href="#chh" x="577.00" y="269.89"/><use href="#cv" x="603.50" y="269.89"/><use href="#chh" x="630.00" y="269.89"/><use href="#cv" x="656.50" y="269.89"/><use href="#chh" x="683.00" y="269.89"/><use href="#cv" x="709.50" y="269.89"/><use href="#chh" x="736.00" y="269.89"/><use href="#cv" x="762.50" y="269.89"/><use href="#cv" x="577.00" y="296.47"/><use href="#chh" x="603.50" y="296.47"/><use href="#cv" x="630.00" y="296.47"/><use href="#chh" x="656.50" y="296.47"/><use href="#cv" x="683.00" y="296.47"/><use href="#chh" x="709.50" y="296.47"/><use href="#cv" x="736.00" y="296.47"/><use href="#chh" x="762.50" y="296.47"/><use href="#chh" x="577.00" y="323.05"/><use href="#cv" x="603.50" y="323.05"/><use href="#chh" x="630.00" y="323.05"/><use href="#cv" x="656.50" y="323.05"/><use href="#chh" x="683.00" y="323.05"/><use href="#cv" x="709.50" y="323.05"/><use href="#chh" x="736.00" y="323.05"/><use href="#cv" x="762.50" y="323.05"/><use href="#cv" x="577.00" y="349.63"/><use href="#chh" x="603.50" y="349.63"/><use href="#cv" x="630.00" y="349.63"/><use href="#chh" x="656.50" y="349.63"/><use href="#cv" x="683.00" y="349.63"/><use href="#chh" x="709.50" y="349.63"/><use href="#cv" x="736.00" y="349.63"/><use href="#chh" x="762.50" y="349.63"/><use href="#chh" x="577.00" y="376.21"/><use href="#cv" x="603.50" y="376.21"/><use href="#chh" x="630.00" y="376.21"/><use href="#cv" x="656.50" y="376.21"/><use href="#chh" x="683.00" y="376.21"/><use href="#cv" x="709.50" y="376.21"/><use href="#chh" x="736.00" y="376.21"/><use href="#cv" x="762.50" y="376.21"/><use href="#cv" x="577.00" y="402.79"/><use href="#chh" x="603.50" y="402.79"/><use href="#cv" x="630.00" y="402.79"/><use href="#chh" x="656.50" y="402.79"/><use href="#cv" x="683.00" y="402.79"/><use href="#chh" x="709.50" y="402.79"/><use href="#cv" x="736.00" y="402.79"/><use href="#chh" x="762.50" y="402.79"/><use href="#chh" x="577.00" y="429.37"/><use href="#cv" x="603.50" y="429.37"/><use href="#chh" x="630.00" y="429.37"/><use href="#cv" x="656.50" y="429.37"/><use href="#chh" x="683.00" y="429.37"/><use href="#cv" x="709.50" y="429.37"/><use href="#chh" x="736.00" y="429.37"/><use href="#cv" x="762.50" y="429.37"/><use href="#cv" x="577.00" y="455.95"/><use href="#chh" x="603.50" y="455.95"/><use href="#cv" x="630.00" y="455.95"/><use href="#chh" x="656.50" y="455.95"/><use href="#cv" x="683.00" y="455.95"/><use href="#chh" x="709.50" y="455.95"/><use href="#cv" x="736.00" y="455.95"/><use href="#chh" x="762.50" y="455.95"/><use href="#chh" x="577.00" y="482.53"/><use href="#cv" x="603.50" y="482.53"/><use href="#chh" x="630.00" y="482.53"/><use href="#cv" x="656.50" y="482.53"/><use href="#chh" x="683.00" y="482.53"/><use href="#cv" x="709.50" y="482.53"/><use href="#chh" x="736.00" y="482.53"/><use href="#cv" x="762.50" y="482.53"/><use href="#cv" x="577.00" y="509.11"/><use href="#chh" x="603.50" y="509.11"/><use href="#cv" x="630.00" y="509.11"/><use href="#chh" x="656.50" y="509.11"/><use href="#cv" x="683.00" y="509.11"/><use href="#chh" x="709.50" y="509.11"/><use href="#cv" x="736.00" y="509.11"/><use href="#chh" x="762.50" y="509.11"/><use href="#chh" x="577.00" y="535.68"/><use href="#cv" x="603.50" y="535.68"/><use href="#chh" x="630.00" y="535.68"/><use href="#cv" x="656.50" y="535.68"/><use href="#chh" x="683.00" y="535.68"/><use href="#cv" x="709.50" y="535.68"/><use href="#chh" x="736.00" y="535.68"/><use href="#cv" x="762.50" y="535.68"/><use href="#cv" x="577.00" y="562.26"/><use href="#chh" x="603.50" y="562.26"/><use href="#cv" x="630.00" y="562.26"/><use href="#chh" x="656.50" y="562.26"/><use href="#cv" x="683.00" y="562.26"/><use href="#chh" x="709.50" y="562.26"/><use href="#cv" x="736.00" y="562.26"/><use href="#chh" x="762.50" y="562.26"/><use href="#chh" x="577.00" y="588.84"/><use href="#cv" x="603.50" y="588.84"/><use href="#chh" x="630.00" y="588.84"/><use href="#cv" x="656.50" y="588.84"/><use href="#chh" x="683.00" y="588.84"/><use href="#cv" x="709.50" y="588.84"/><use href="#chh" x="736.00" y="588.84"/><use href="#cv" x="762.50" y="588.84"/><use href="#cv" x="577.00" y="615.42"/><use href="#chh" x="603.50" y="615.42"/><use href="#cv" x="630.00" y="615.42"/><use href="#chh" x="656.50" y="615.42"/><use href="#cv" x="683.00" y="615.42"/><use href="#chh" x="709.50" y="615.42"/><use href="#cv" x="736.00" y="615.42"/><use href="#chh" x="762.50" y="615.42"/></g></svg>
<div class="a t" style="left:308.4px;top:77.3px;width:40px;text-align:center;font-size:10px;letter-spacing:0.55px">-1000</div>
<div class="a t" style="left:379.1px;top:77.3px;width:40px;text-align:center;font-size:10px;letter-spacing:0.55px">-800</div>
<div class="a t" style="left:449.8px;top:77.3px;width:40px;text-align:center;font-size:10px;letter-spacing:0.55px">-600</div>
<div class="a t" style="left:520.5px;top:77.3px;width:40px;text-align:center;font-size:10px;letter-spacing:0.55px">-400</div>
<div class="a t" style="left:591.2px;top:77.3px;width:40px;text-align:center;font-size:10px;letter-spacing:0.55px">-200</div>
<div class="a t" style="left:661.9px;top:77.3px;width:40px;text-align:center;font-size:10px;letter-spacing:0.55px">0</div>
<div class="a t" style="left:732.6px;top:77.3px;width:40px;text-align:center;font-size:10px;letter-spacing:0.55px">200</div>
<div class="a t" style="left:803.3px;top:77.3px;width:40px;text-align:center;font-size:10px;letter-spacing:0.55px">400</div>
<div class="a t" style="left:874.0px;top:77.3px;width:40px;text-align:center;font-size:10px;letter-spacing:0.55px">600</div>
<div class="a t" style="left:944.7px;top:77.3px;width:40px;text-align:center;font-size:10px;letter-spacing:0.55px">800</div>
<div class="a t" style="left:1027.6px;top:78.22px;font-size:8.6px;letter-spacing:-0.15px;">millimetres</div>
<div class="a t" style="left:264.8px;top:666.1px;width:40px;height:12px;line-height:12px;text-align:center;font-size:10px;letter-spacing:0.5px;transform:rotate(-90deg);will-change:transform">-800</div>
<div class="a t" style="left:264.8px;top:595.4px;width:40px;height:12px;line-height:12px;text-align:center;font-size:10px;letter-spacing:0.5px;transform:rotate(-90deg);will-change:transform">-600</div>
<div class="a t" style="left:264.8px;top:524.7px;width:40px;height:12px;line-height:12px;text-align:center;font-size:10px;letter-spacing:0.5px;transform:rotate(-90deg);will-change:transform">-400</div>
<div class="a t" style="left:264.8px;top:454.0px;width:40px;height:12px;line-height:12px;text-align:center;font-size:10px;letter-spacing:0.5px;transform:rotate(-90deg);will-change:transform">-200</div>
<div class="a t" style="left:264.8px;top:383.3px;width:40px;height:12px;line-height:12px;text-align:center;font-size:10px;letter-spacing:0.5px;transform:rotate(-90deg);will-change:transform">0</div>
<div class="a t" style="left:264.8px;top:312.6px;width:40px;height:12px;line-height:12px;text-align:center;font-size:10px;letter-spacing:0.5px;transform:rotate(-90deg);will-change:transform">200</div>
<div class="a t" style="left:264.8px;top:241.9px;width:40px;height:12px;line-height:12px;text-align:center;font-size:10px;letter-spacing:0.5px;transform:rotate(-90deg);will-change:transform">400</div>
<div class="a t" style="left:264.8px;top:171.2px;width:40px;height:12px;line-height:12px;text-align:center;font-size:10px;letter-spacing:0.5px;transform:rotate(-90deg);will-change:transform">600</div>
<div class="a t" style="left:264.8px;top:100.5px;width:40px;height:12px;line-height:12px;text-align:center;font-size:10px;letter-spacing:0.5px;transform:rotate(-90deg);will-change:transform">800</div>
<div class="a raised" style="left:1071px;top:75px;width:17px;height:20px;"></div>
<div class="a raised" style="left:278px;top:686px;width:20px;height:16px;"></div><svg class="a" style="left:0px;top:0px;pointer-events:none" width="1366" height="768" viewBox="0 0 1366 768"><path d="M277.5 74.5H1070.5M277.5 94.5H1070.5M277.5 74V701M297.5 74V685.5M1070.5 74V95" stroke="#8c8c8c" stroke-width="1" fill="none"/>
<path d="M277.5 685.5H298" stroke="#8c8c8c" stroke-width="1"/>
<path d="M281.5 84.5H294M287.5 78.5V91" stroke="#c0c0c0" stroke-width="1" stroke-dasharray="2 1.2"/><path d="M284.5 82V87.5M290.5 82V87.5" stroke="#d0d0d0" stroke-width="1" stroke-dasharray="1 1"/>
<path d="M300.5 92V94M307.5 92V94M314.5 92V94M321.5 92V94M328.5 88V94M335.5 92V94M342.5 92V94M349.5 92V94M356.5 92V94M363.5 90V94M370.5 92V94M377.5 92V94M384.5 92V94M391.5 92V94M399.5 88V94M406.5 92V94M413.5 92V94M420.5 92V94M427.5 92V94M434.5 90V94M441.5 92V94M448.5 92V94M455.5 92V94M462.5 92V94M469.5 88V94M476.5 92V94M483.5 92V94M490.5 92V94M498.5 92V94M505.5 90V94M512.5 92V94M519.5 92V94M526.5 92V94M533.5 92V94M540.5 88V94M547.5 92V94M554.5 92V94M561.5 92V94M568.5 92V94M575.5 90V94M582.5 92V94M589.5 92V94M597.5 92V94M604.5 92V94M611.5 88V94M618.5 92V94M625.5 92V94M632.5 92V94M639.5 92V94M646.5 90V94M653.5 92V94M660.5 92V94M667.5 92V94M674.5 92V94M681.5 88V94M688.5 92V94M696.5 92V94M703.5 92V94M710.5 92V94M717.5 90V94M724.5 92V94M731.5 92V94M738.5 92V94M745.5 92V94M752.5 88V94M759.5 92V94M766.5 92V94M773.5 92V94M780.5 92V94M787.5 90V94M795.5 92V94M802.5 92V94M809.5 92V94M816.5 92V94M823.5 88V94M830.5 92V94M837.5 92V94M844.5 92V94M851.5 92V94M858.5 90V94M865.5 92V94M872.5 92V94M879.5 92V94M886.5 92V94M894.5 88V94M901.5 92V94M908.5 92V94M915.5 92V94M922.5 92V94M929.5 90V94M936.5 92V94M943.5 92V94M950.5 92V94M957.5 92V94M964.5 88V94M971.5 92V94M978.5 92V94M985.5 92V94M993.5 92V94M1000.5 90V94M1007.5 92V94M1014.5 92V94M1021.5 92V94M1028.5 92V94M1035.5 88V94M1042.5 92V94M1049.5 92V94M1056.5 92V94M1063.5 92V94" stroke="#000" stroke-width="1"/>
<path d="M1066.5 76V94" stroke="#000" stroke-width="1"/>
<path d="M295 679.5H297M291 672.5H297M295 665.5H297M295 657.5H297M295 650.5H297M295 643.5H297M293 636.5H297M295 629.5H297M295 622.5H297M295 615.5H297M295 608.5H297M291 601.5H297M295 594.5H297M295 587.5H297M295 580.5H297M295 573.5H297M293 566.5H297M295 559.5H297M295 551.5H297M295 544.5H297M295 537.5H297M291 530.5H297M295 523.5H297M295 516.5H297M295 509.5H297M295 502.5H297M293 495.5H297M295 488.5H297M295 481.5H297M295 474.5H297M295 467.5H297M291 460.5H297M295 452.5H297M295 445.5H297M295 438.5H297M295 431.5H297M293 424.5H297M295 417.5H297M295 410.5H297M295 403.5H297M295 396.5H297M291 389.5H297M295 382.5H297M295 375.5H297M295 368.5H297M295 361.5H297M293 353.5H297M295 346.5H297M295 339.5H297M295 332.5H297M295 325.5H297M291 318.5H297M295 311.5H297M295 304.5H297M295 297.5H297M295 290.5H297M293 283.5H297M295 276.5H297M295 269.5H297M295 262.5H297M295 254.5H297M291 247.5H297M295 240.5H297M295 233.5H297M295 226.5H297M295 219.5H297M293 212.5H297M295 205.5H297M295 198.5H297M295 191.5H297M295 184.5H297M291 177.5H297M295 170.5H297M295 163.5H297M295 155.5H297M295 148.5H297M293 141.5H297M295 134.5H297M295 127.5H297M295 120.5H297M295 113.5H297M291 106.5H297M295 99.5H297" stroke="#000" stroke-width="1"/>
<path d="M280 589.5H297" stroke="#000" stroke-width="1"/>
<path d="M1075 81.5H1078M1080 81.5H1083" stroke="#000" stroke-width="1.4"/><path d="M1074.6 84.2H1083.4L1079 88.4Z" fill="#000"/>
<path d="M284.5 689V691.4M284.5 694V696.6" stroke="#000" stroke-width="1.4"/><path d="M287.4 688.4L292.6 693L287.4 697.6Z" fill="#000"/></svg>
<div class="a" style="left:1072px;top:112px;width:15px;height:556px;background:#cdcdcd"></div>
<div class="a" style="left:315px;top:687px;width:739px;height:14px;background:#cdcdcd"></div><svg class="a" style="left:0px;top:0px;" width="1366" height="768" viewBox="0 0 1366 768"><path d="M1075.9 105.8L1079.5 102.2L1083.1 105.8" fill="none" stroke="#5c5c5c" stroke-width="2.1"/>
<path d="M1075.9 674.8000000000001L1079.5 678.4L1083.1 674.8000000000001" fill="none" stroke="#5c5c5c" stroke-width="2.1"/>
<path d="M307.8 690.1999999999999L304.2 693.8L307.8 697.4" fill="none" stroke="#5c5c5c" stroke-width="2.1"/>
<path d="M1061.2 690.1999999999999L1064.8 693.8L1061.2 697.4" fill="none" stroke="#5c5c5c" stroke-width="2.1"/>
<path d="M1075.9 718.1999999999999L1079.5 714.6L1083.1 718.1999999999999" fill="none" stroke="#5c5c5c" stroke-width="2.1"/>
<path d="M1075.9 737.2L1079.5 740.8L1083.1 737.2" fill="none" stroke="#5c5c5c" stroke-width="2.1"/></svg>
<div class="a" style="left:298px;top:723px;width:25px;height:20px;background:#000"></div>
<div class="a" style="left:283px;top:711px;width:25px;height:20px;background:#fff;border:1px solid #000;box-shadow:1px 1px 0 #9a9a9a"></div>
<div class="a sw" style="left:333px;top:712px;width:30px;height:30px;background:#ffffff"></div>
<div class="a sw" style="left:368px;top:712px;width:30px;height:30px;background:#000000"></div>
<div class="a sw" style="left:403px;top:712px;width:30px;height:30px;background:#00ffff"></div>
<div class="a sw" style="left:438px;top:712px;width:30px;height:30px;background:#2f40d8"></div>
<div class="a sw" style="left:473px;top:712px;width:30px;height:30px;background:#54b84e"></div>
<div class="a sw" style="left:508px;top:712px;width:30px;height:30px;background:#d81426"></div>
<div class="a sw" style="left:543px;top:712px;width:30px;height:30px;background:#a42ee2"></div>
<div class="a sw" style="left:578px;top:712px;width:30px;height:30px;background:#ffff80"></div>
<div class="a sw" style="left:613px;top:712px;width:30px;height:30px;background:#aba03a"></div>
<div class="a sw" style="left:648px;top:712px;width:30px;height:30px;background:#f8c818"></div>
<div class="a sw" style="left:683px;top:712px;width:30px;height:30px;background:#060606"></div>
<div class="a sw" style="left:718px;top:712px;width:30px;height:30px;background:#060606"></div>
<div class="a sw" style="left:753px;top:712px;width:30px;height:30px;background:#060606"></div>
<div class="a sw" style="left:788px;top:712px;width:30px;height:30px;background:#060606"></div>
<div class="a sw" style="left:823px;top:712px;width:30px;height:30px;background:#060606"></div>
<div class="a sw" style="left:858px;top:712px;width:30px;height:30px;background:#060606"></div>
<div class="a sw" style="left:893px;top:712px;width:30px;height:30px;background:#060606"></div>
<div class="a sw" style="left:928px;top:712px;width:30px;height:30px;background:#060606"></div>
<div class="a sw" style="left:963px;top:712px;width:30px;height:30px;background:#060606"></div>
<div class="a sw" style="left:998px;top:712px;width:30px;height:30px;background:#060606"></div>
<div class="a sw" style="left:1033px;top:712px;width:30px;height:30px;background:#060606"></div><svg class="a" style="left:0px;top:0px;" width="1366" height="768" viewBox="0 0 1366 768"><path d="M277.5 747V706.5H1088" stroke="#8c8c8c" stroke-width="1" fill="none"/>
<rect x="311.8" y="712.8" width="7" height="4.6" rx="2" fill="none" stroke="#000" stroke-width="1.3"/><rect x="315" y="715.2" width="7.6" height="4.8" rx="2" fill="#f0f0f0" stroke="#000" stroke-width="1.3"/></svg>
<div class="a rh" style="left:1102px;top:45px;width:243px;height:15px;"></div>
<div class="a t" style="left:1106px;top:46.34px;font-size:12px;letter-spacing:-0.05px;font-weight:bold;color:#fff;">Vectors</div>
<div class="a rcb" style="left:1327px;top:46px;width:12px;height:13px;"></div>
<div class="a rh" style="left:1102px;top:76px;width:243px;height:15px;"></div>
<div class="a t" style="left:1106px;top:77.34px;font-size:12px;letter-spacing:-0.05px;font-weight:bold;color:#fff;">Bitmaps</div>
<div class="a rcb" style="left:1327px;top:77px;width:12px;height:13px;"></div>
<div class="a rh" style="left:1102px;top:157px;width:243px;height:15px;"></div>
<div class="a t" style="left:1106px;top:158.34px;font-size:12px;letter-spacing:-0.05px;font-weight:bold;color:#fff;">Reliefs</div>
<div class="a rcb" style="left:1327px;top:158px;width:12px;height:13px;"></div>
<div class="a" style="left:1102px;top:117px;width:243px;height:23px;background:#d5d5d5"></div>
<div class="a t" style="left:1128px;top:122.74px;font-size:12px;letter-spacing:0.02px;">Bitmap Layer 1</div>
<div class="a" style="left:1103px;top:174px;width:239px;height:22px;background:#fff;border-top:1px solid #696969;border-left:1px solid #696969;border-right:1px solid #e8e8e8;border-bottom:1px solid #e8e8e8;box-shadow:inset 1px 1px 0 #a0a0a0"></div>
<div class="a t" style="left:1105.4px;top:176.34px;font-size:12px;letter-spacing:0.1px;">Front Relief</div>
<div class="a raised" style="left:1325.5px;top:175.5px;width:16px;height:19px;"></div>
<div class="a" style="left:1102px;top:224px;width:243px;height:26px;background:#d5d5d5"></div>
<div class="a t" style="left:1149.2px;top:231.04px;font-size:12px;">Relief Layer 1</div>
<div class="a" style="left:1094px;top:721.5px;width:272px;height:26px;background:#d2d2d2"></div>
<svg class="a" style="left:1094px;top:721.5px;" width="272" height="26" viewBox="0 0 272 26"><rect width="272" height="26" filter="url(#nz)"/></svg>
<div class="a" style="left:1094px;top:721.5px;width:50px;height:25.5px;background:#f0f0f0;border-bottom-right-radius:7px"></div>
<div class="a" style="left:1143.5px;top:721.5px;width:48.5px;height:24.5px;background:#f0f0f0;border:1px solid #a8a8a8;border-top-left-radius:5px;border-bottom-right-radius:7px;border-bottom-left-radius:2px"></div>
<div class="a t" style="left:1103px;top:726.04px;font-size:12px;letter-spacing:-0.6px;">Layers</div>
<div class="a t" style="left:1151.2px;top:726.04px;font-size:12px;letter-spacing:-0.1px;">Add In</div><svg class="a" style="left:0px;top:0px;" width="1366" height="768" viewBox="0 0 1366 768"><defs><linearGradient id="gdoc2" x1="0" y1="0" x2="1" y2="1"><stop offset="0" stop-color="#c4d2e8"/><stop offset="1" stop-color="#6a88b4"/></linearGradient><linearGradient id="ggr" x1="0.2" y1="0" x2="0.6" y2="1"><stop offset="0" stop-color="#8c8c8c"/><stop offset="0.8" stop-color="#f4f4f4"/></linearGradient><linearGradient id="gud" x1="0" y1="0" x2="0" y2="1"><stop offset="0" stop-color="#2c5cb4"/><stop offset="0.5" stop-color="#0c3a90"/><stop offset="1" stop-color="#0a3384"/></linearGradient><linearGradient id="grel" x1="0" y1="0" x2="1" y2="1"><stop offset="0" stop-color="#f4e6a0"/><stop offset="1" stop-color="#a88a3a"/></linearGradient></defs>
<path d="M1093.5 44V747.5H1366" stroke="#8c8c8c" stroke-width="1" fill="none"/>
<path d="M1333 56.199999999999996L1336.8 48.6H1329.2Z" fill="#3c3c3c"/>
<path d="M1333 79.60000000000001L1336.8 87.2H1329.2Z" fill="#3c3c3c"/>
<path d="M1333 160.6L1336.8 168.20000000000002H1329.2Z" fill="#3c3c3c"/>
<path d="M1112 105.8L1117 105.8L1114.4 110.8L1112 111.39999999999999Z" fill="#b8b8b8"/><path d="M1104 96.8H1108.6L1112 101.2V111.39999999999999H1104Z" fill="url(#gdoc2)"/><path d="M1108.6 96.8L1112 101.2H1108.6Z" fill="#f2f6ff"/>
<path d="M1137.4 111.6L1150.0 109L1150.4 107.8L1139.4 110Z" fill="#bcbcbc"/><path d="M1134.4 101L1136.6000000000001 98.6H1141.4L1142.8000000000002 100H1146.8000000000002V105.4L1135.4 110.4Z" fill="#f6e822"/><path d="M1135.4 111L1137.4 105.2Q1142.4 103.2 1150.0 104.4L1148.4 109Q1141.4 109.6 1135.4 111Z" fill="#e6cf08"/>
<path d="M1176.6 106.4L1181.0 105.6L1178.6 110.6L1176.6 111Z" fill="#bdbdbd"/><path d="M1165.6 97H1177.0V111H1166.8L1165.6 109.8Z" fill="#2457c4"/><rect x="1167.8" y="97.8" width="7" height="5.6" fill="#e2e6ee"/><rect x="1168.3999999999999" y="106" width="6" height="5" fill="#c8ccd8"/><rect x="1169.3999999999999" y="107" width="1.8" height="3.2" fill="#2457c4"/>
<path d="M1208.8 109.6L1214.3999999999999 108.6L1212.3999999999999 111.39999999999999L1208.8 112.0Z" fill="#b9b9b9"/><path d="M1198.8 96.6L1205.3999999999999 97.0L1206.3999999999999 100.0L1209.3999999999999 101.6L1210.3999999999999 111.0L1200.2 110.6L1200.3999999999999 106.6L1198.2 104.6L1199.2 101.6L1198.3999999999999 99.0Z" fill="#caa676"/><path d="M1199.2 97.19999999999999V110.19999999999999M1202.3999999999999 99.6V110.19999999999999M1205.8 101.19999999999999V110.39999999999999M1209.0 102.6V110.6" stroke="#b48c56" stroke-width="0.8" stroke-dasharray="1.2 1.2" fill="none"/>
<path d="M1243 105L1247.6 104L1245 109.6L1243 110.4Z" fill="#b4b4b4"/><rect x="1229.8" y="97" width="13.4" height="13.4" fill="url(#ggr)"/>
<rect x="1261" y="96.6" width="9.6" height="11" fill="#8e8e52"/><rect x="1261" y="96.6" width="9.6" height="3.74" fill="#d4d49c"/><rect x="1261" y="100.34" width="9.6" height="2.20" fill="#a8a870"/><path d="M1261 107.6V102.10L1262.34 101.00Q1262.34 97.15 1265.03 97.04Q1267.53 97.15 1267.53 101.00L1269.06 102.76L1270.6 103.64V107.6Z" fill="#2a1808"/><ellipse cx="1264.84" cy="100.45" rx="1.44" ry="1.87" fill="#ecc890"/><path d="M1262.73 106.06L1263.69 103.64L1265.61 103.20L1267.34 104.96L1265.80 107.16Z" fill="#dcb468"/>
<path d="M1264.6 104.6L1273 103.4L1277 110.6L1265.6 111.4Z" fill="#8a8ad8"/>
<path d="M1295.2 99.6H1305.0L1303.8000000000002 109.6Q1300.1000000000001 111.19999999999999 1296.4 109.6Z" fill="#3a7ce0"/><ellipse cx="1300.1000000000001" cy="99.6" rx="5.2" ry="1.9" fill="#a8d0f8" stroke="#2a5cc0" stroke-width="0.8"/><path d="M1297.4 102.0V108.6" stroke="#8cc0f8" stroke-width="1.4"/>
<rect x="1323.4" y="95.4" width="17" height="17" fill="#f6f6f6"/><path d="M1323.4 112.4V95.4H1340.4" fill="none" stroke="#9a9a9a" stroke-width="1"/><circle cx="1329.2" cy="102.80000000000001" r="4.9" fill="#fad02c"/><circle cx="1328.4" cy="101.4" r="2.3" fill="#fff6b4"/><rect x="1327.4" y="107.4" width="3.4" height="4" fill="#241404"/><circle cx="1335.4" cy="101.2" r="4.9" fill="#fbda3c"/><circle cx="1334.6000000000001" cy="99.80000000000001" r="2.3" fill="#fffad0"/><rect x="1333.8000000000002" y="105.80000000000001" width="3.4" height="4.2" fill="#341c06"/>
<rect x="1106" y="120.4" width="16" height="16.8" fill="#8e8e52"/><rect x="1106" y="120.4" width="16" height="5.71" fill="#d4d49c"/><rect x="1106" y="126.11" width="16" height="3.36" fill="#a8a870"/><path d="M1106 137.20000000000002V128.80L1108.24 127.12Q1108.24 121.24 1112.72 121.07Q1116.88 121.24 1116.88 127.12L1119.44 129.81L1122 131.15V137.20000000000002Z" fill="#2a1808"/><ellipse cx="1112.40" cy="126.28" rx="2.40" ry="2.86" fill="#ecc890"/><path d="M1108.88 134.85L1110.48 131.15L1113.68 130.48L1116.56 133.17L1114.00 136.53Z" fill="#dcb468"/>
<path d="M1329.6 183.2H1337.4L1333.5 187.2Z" fill="#000"/>
<path d="M1112 212.4L1117 212.4L1114.4 217.4L1112 218.0Z" fill="#b8b8b8"/><path d="M1104 203.4H1108.6L1112 207.8V218.0H1104Z" fill="url(#gdoc2)"/><path d="M1108.6 203.4L1112 207.8H1108.6Z" fill="#f2f6ff"/>
<path d="M1132.6 218.2L1145.1999999999998 215.6L1145.6 214.4L1134.6 216.6Z" fill="#bcbcbc"/><path d="M1129.6 207.6L1131.8 205.2H1136.6L1138.0 206.6H1142.0V212.0L1130.6 217.0Z" fill="#f6e822"/><path d="M1130.6 217.6L1132.6 211.79999999999998Q1137.6 209.79999999999998 1145.1999999999998 211.0L1143.6 215.6Q1136.6 216.2 1130.6 217.6Z" fill="#e6cf08"/>
<path d="M1168.8 213.0L1173.2 212.2L1170.8 217.2L1168.8 217.6Z" fill="#bdbdbd"/><path d="M1157.8 203.6H1169.2V217.6H1159.0L1157.8 216.4Z" fill="#2457c4"/><rect x="1160.0" y="204.4" width="7" height="5.6" fill="#e2e6ee"/><rect x="1160.6" y="212.6" width="6" height="5" fill="#c8ccd8"/><rect x="1161.6" y="213.6" width="1.8" height="3.2" fill="#2457c4"/>
<path d="M1196.4 216.2L1202.0 215.2L1200.0 218.0L1196.4 218.6Z" fill="#b9b9b9"/><path d="M1186.4 203.2L1193.0 203.6L1194.0 206.6L1197.0 208.2L1198.0 217.6L1187.8000000000002 217.2L1188.0 213.2L1185.8000000000002 211.2L1186.8000000000002 208.2L1186.0 205.6Z" fill="#caa676"/><path d="M1186.8000000000002 203.79999999999998V216.79999999999998M1190.0 206.2V216.79999999999998M1193.4 207.79999999999998V217.0M1196.6000000000001 209.2V217.2" stroke="#b48c56" stroke-width="0.8" stroke-dasharray="1.2 1.2" fill="none"/>
<path d="M1212.6 207.6L1221 203.6L1228.8 207.6L1220.4 211.6Z" fill="#6a78e0"/><path d="M1212.6 213.4L1221 209.4L1228.8 213.4L1220.4 217.8Z" fill="#a81818"/><path d="M1218.6 210.6H1222.8V213H1224.4L1220.7 216L1217 213H1218.6Z" fill="#f8e8c0"/>
<rect x="1243" y="203.4" width="10.6" height="15.4" fill="#a8b4cc"/><path d="M1249.4 203.4L1253.6 207.6V203.4Z" fill="#e8ecf4"/><circle cx="1248.4" cy="211.4" r="4" fill="#f8d840"/><rect x="1247" y="215" width="2.8" height="3.4" fill="#4a3008"/>
<rect x="1269.6" y="203.6" width="14.4" height="15" fill="#050505"/><circle cx="1274.2" cy="205.9" r="1.2" fill="#f4f4f4"/><circle cx="1279.6" cy="205.9" r="1.2" fill="#f4f4f4"/><path d="M1276.8 208.7Q1271.8 210.0 1272.0 215.6Q1276.8 217.3 1281.7 215.6Q1281.8 210.0 1276.8 208.7Z" fill="#dadada"/><circle cx="1277.0" cy="207.5" r="2.7" fill="#a4a4a4"/><ellipse cx="1276.8" cy="213.4" rx="2.5" ry="2.5" fill="#8e8e8e"/><ellipse cx="1274.3" cy="216.1" rx="1.3" ry="1.0" fill="#f4f4f4"/><ellipse cx="1279.0" cy="216.1" rx="1.3" ry="1.0" fill="#f4f4f4"/>
<path d="M1299.2 206.4H1309.0L1307.8000000000002 216.4Q1304.1000000000001 218.0 1300.4 216.4Z" fill="#3a7ce0"/><ellipse cx="1304.1000000000001" cy="206.4" rx="5.2" ry="1.9" fill="#a8d0f8" stroke="#2a5cc0" stroke-width="0.8"/><path d="M1301.4 208.8V215.4" stroke="#8cc0f8" stroke-width="1.4"/>
<rect x="1323.4" y="202.6" width="17" height="17" fill="#f6f6f6"/><path d="M1323.4 219.6V202.6H1340.4" fill="none" stroke="#9a9a9a" stroke-width="1"/><circle cx="1329.2" cy="210.0" r="4.9" fill="#fad02c"/><circle cx="1328.4" cy="208.6" r="2.3" fill="#fff6b4"/><rect x="1327.4" y="214.6" width="3.4" height="4" fill="#241404"/><circle cx="1335.4" cy="208.4" r="4.9" fill="#fbda3c"/><circle cx="1334.6000000000001" cy="207.0" r="2.3" fill="#fffad0"/><rect x="1333.8000000000002" y="213.0" width="3.4" height="4.2" fill="#341c06"/>
<path d="M1113.6 240Q1112 230.6 1121 229Q1128 228.4 1131.6 236.6L1127.6 239.4Q1124 232.6 1119.4 234.6Q1116.4 236.4 1117 240.4Z" fill="url(#grel)" stroke="#8a7030" stroke-width="0.6"/>
<path d="M1114.6 241.4Q1114 235 1119.6 234.6Q1124 234.4 1126.6 240Q1120 243.6 1114.6 241.4Z" fill="#8a8ad0"/>
<path d="M1111.4 243.4H1118.6M1115 239.8V247" stroke="#000" stroke-width="1.1"/>
<path d="M1139.4 233.6L1143.6 237.6L1139.4 241.6Z" fill="#000"/>
<rect x="1323.4" y="228" width="17" height="17" fill="#e2e2e2"/><path d="M1323.4 245V228H1340.4" fill="none" stroke="#8c8c8c" stroke-width="1"/><path d="M1323.9 245H1340.4V228.5" fill="none" stroke="#fff" stroke-width="1"/><circle cx="1332.0" cy="235.2" r="4.9" fill="#f8d43a"/><circle cx="1330.8000000000002" cy="233.8" r="2" fill="#fff6b0"/><rect x="1330.2" y="239.6" width="3.6" height="4.2" fill="#5a2c08"/>
<rect x="1311.8" y="253.2" width="12" height="12" rx="1.6" fill="url(#gud)" stroke="#2a52a4" stroke-width="0.6"/>
<path d="M1317.8 256V263M1314.6 259L1317.8 255.8L1321.0 259" fill="none" stroke="#fff" stroke-width="1.7"/>
<rect x="1330.2" y="253.2" width="12" height="12" rx="1.6" fill="url(#gud)" stroke="#2a52a4" stroke-width="0.6"/>
<path d="M1336.2 255.4V262.4M1333.0 259.4L1336.2 262.6L1339.4 259.4" fill="none" stroke="#fff" stroke-width="1.7"/></svg>
<div class="a sunk" style="left:1022px;top:751px;width:67px;height:18px;"></div>
<div class="a sunk" style="left:1092px;top:751px;width:66px;height:18px;"></div>
<div class="a sunk" style="left:1161px;top:751px;width:60px;height:18px;"></div>
<div class="a sunk" style="left:1224px;top:751px;width:70px;height:18px;"></div>
<div class="a sunk" style="left:1297px;top:751px;width:71px;height:18px;"></div>
<div class="a t" style="left:1024.6px;top:752.34px;font-size:12px;letter-spacing:-0.67px;">X: 1085.714</div>
<div class="a t" style="left:1094px;top:752.34px;font-size:12px;letter-spacing:-0.5px;">Y: -564.639</div>
</div></body></html>
